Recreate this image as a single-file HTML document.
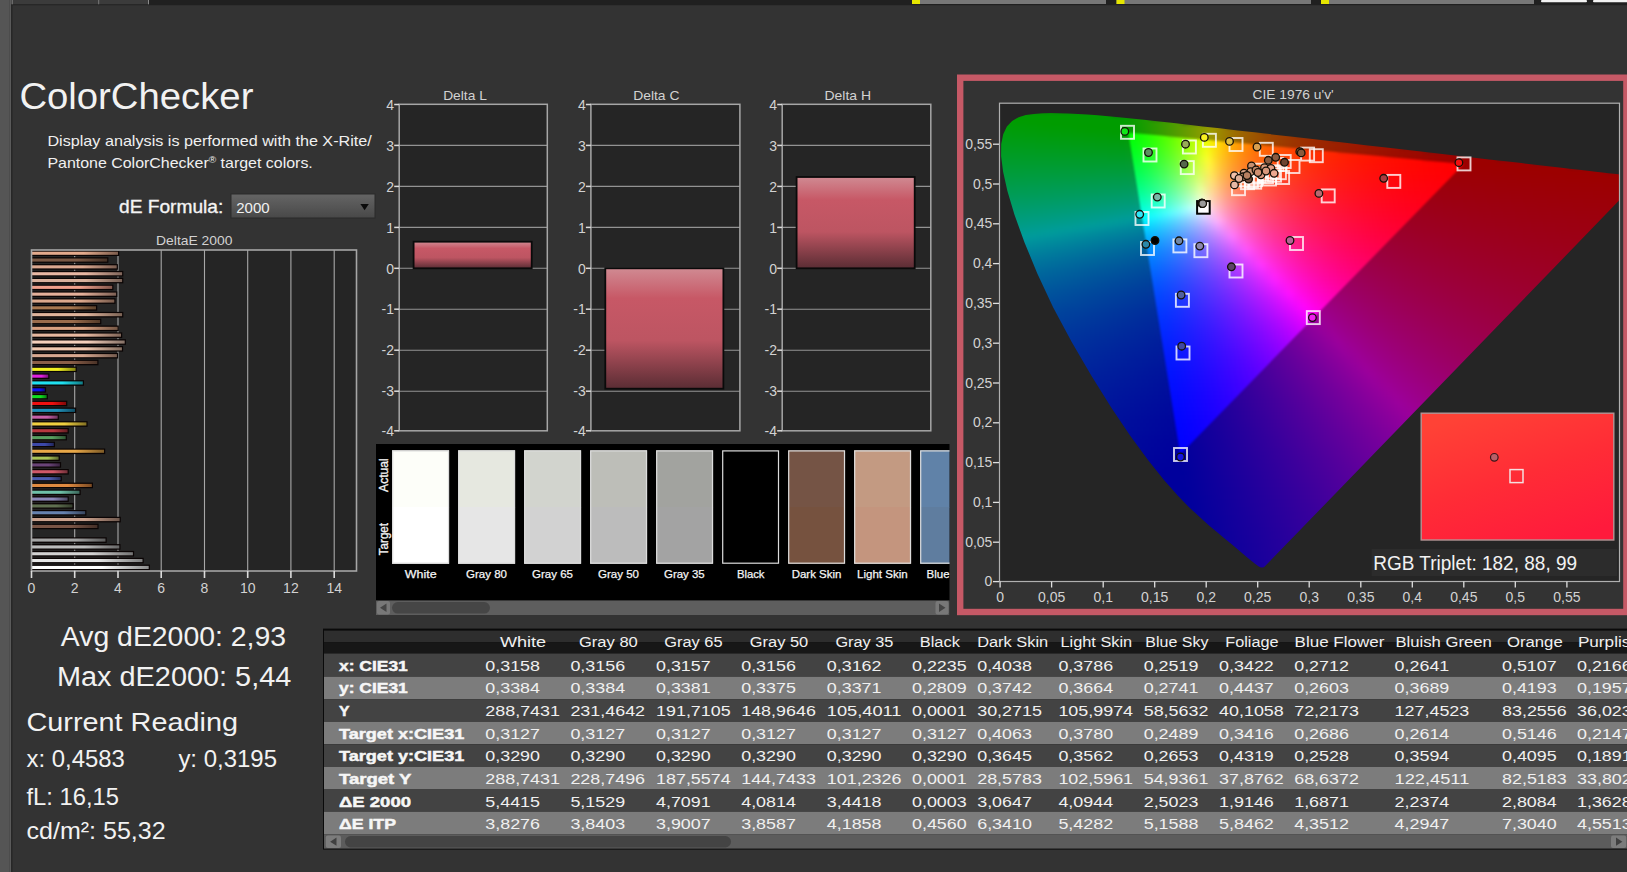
<!DOCTYPE html>
<html lang="en"><head><meta charset="utf-8"><title>ColorChecker</title>
<style>
html,body{margin:0;padding:0;background:#333333;overflow:hidden}
#pg{position:relative;width:1627px;height:872px;overflow:hidden;background:#333333;font-family:'Liberation Sans',sans-serif}
.cie{position:absolute;background:#252525;overflow:hidden}
.lay{position:absolute;left:0;top:0;width:100%;height:100%}
.lay i{position:absolute;display:block}
.sm{position:absolute;left:0;top:0;width:100%;height:100%;filter:blur(2px)}
.blur{position:absolute;left:0;top:0;width:100%;height:100%;filter:blur(.8px)}
#ov{position:absolute;left:0;top:0}
#ov text{font-family:'Liberation Sans',sans-serif;white-space:pre}
</style></head>
<body><div id="pg">
<div class="cie" style="left:999px;top:103px;width:621px;height:479px"><div class="lay" style="clip-path:polygon(265.2px 464.1px,265.1px 464.0px,265.0px 464.1px,264.8px 464.2px,264.5px 464.2px,264.3px 464.2px,264.2px 464.4px,264.0px 464.6px,263.7px 464.6px,263.2px 464.5px,262.8px 464.5px,262.3px 464.5px,261.7px 464.4px,260.8px 464.0px,259.4px 463.2px,257.7px 462.0px,255.7px 460.5px,253.2px 458.5px,250.1px 456.0px,246.5px 453.0px,242.4px 449.4px,237.7px 445.5px,232.1px 440.8px,225.6px 435.4px,218.2px 429.3px,210.0px 422.4px,200.7px 414.1px,190.3px 404.5px,178.9px 392.8px,165.2px 377.2px,149.0px 357.0px,131.2px 332.8px,112.2px 304.6px,92.4px 272.7px,72.7px 239.0px,54.2px 204.4px,38.4px 170.7px,25.5px 139.4px,15.4px 111.5px,8.4px 88.1px,4.1px 68.8px,2.1px 53.3px,2.2px 41.0px,4.2px 31.2px,7.9px 23.5px,13.1px 17.9px,19.6px 14.2px,26.8px 12.0px,34.8px 10.9px,43.3px 10.3px,52.1px 10.1px,60.9px 10.2px,69.8px 10.4px,79.0px 10.9px,88.6px 11.5px,98.7px 12.2px,109.3px 13.2px,120.4px 14.2px,132.3px 15.4px,144.9px 16.8px,158.3px 18.2px,172.5px 19.8px,187.6px 21.5px,203.7px 23.4px,220.7px 25.3px,238.7px 27.4px,257.7px 29.6px,277.6px 31.9px,298.4px 34.3px,319.9px 36.7px,342.1px 39.3px,364.8px 41.9px,387.2px 44.5px,409.1px 47.1px,430.8px 49.6px,451.8px 52.0px,471.5px 54.2px,489.9px 56.4px,507.0px 58.3px,522.5px 60.1px,536.6px 61.8px,549.2px 63.2px,560.5px 64.5px,570.7px 65.7px,580.2px 66.8px,588.8px 67.8px,596.6px 68.7px,603.5px 69.5px,609.7px 70.2px,614.9px 70.8px,619.3px 71.3px,623.1px 71.7px,626.4px 72.1px,629.1px 72.4px,631.3px 72.7px,633.0px 72.9px,634.5px 73.1px,635.9px 73.2px,637.0px 73.4px,638.2px 73.5px,639.4px 73.6px,640.4px 73.7px,641.4px 73.9px,641.9px 73.9px,642.3px 74.0px,642.6px 74.0px,642.8px 74.0px,642.9px 74.0px)"><div class="sm"><i style="left:18px;top:8px;width:96px;height:4px;background:linear-gradient(90deg,#009c00,#009c00,#009c00,#009c00,#009c00,#009c00,#009c00,#009c00,#009c00)"></i>
<i style="left:8px;top:12px;width:144px;height:4px;background:linear-gradient(90deg,#009c00,#009c00,#009c00,#009c00,#009c00,#009c00,#009c00,#009c00,#009c00,#009c00,#029c00,#139c00,#269c00)"></i>
<i style="left:3px;top:16px;width:180px;height:4px;background:linear-gradient(90deg,#009c00,#009c00,#009c00,#009c00,#009c00,#009c00,#009c00,#009c00,#009c00,#009c00,#009c00,#0b9c00,#1d9c00,#319c00,#469c00,#5c9c00)"></i>
<i style="left:-1px;top:20px;width:228px;height:4px;background:linear-gradient(90deg,#009c05,#009c04,#009c03,#009c02,#009c00,#009c00,#009c00,#009c00,#009c00,#009c00,#009c00,#049c00,#169c00,#2a9c00,#3e9c00,#559c00,#6d9c00,#879c00,#9c9500,#9c7d00)"></i>
<i style="left:-3px;top:24px;width:264px;height:4px;background:linear-gradient(90deg,#009c09,#009c08,#009c07,#009c06,#009c05,#009c04,#009c03,#009c01,#009c00,#009c00,#009c00,#009c00,#129c00,#269c00,#3a9c00,#519c00,#699c00,#839c00,#9c9800,#9c8000,#9c6d00,#9c5d00,#9c5100)"></i>
<i style="left:-4px;top:28px;width:300px;height:4px;background:linear-gradient(90deg,#009c0d,#009c0c,#009c0b,#009c0a,#009c09,#009c08,#009c07,#009c06,#009c05,#009c04,#009c02,#009c01,#109c00,#239c00,#389c00,#4f9c00,#679c00,#819c00,#9c9a00,#9c8100,#9c6d00,#9c5e00,#9c5100,#9c4600,#9c3d00,#9c3600)"></i>
<i style="left:-5px;top:32px;width:336px;height:4px;background:linear-gradient(90deg,#009c11,#009c11,#009c10,#009c0f,#009c0e,#009c0d,#009c0c,#009c0b,#009c0a,#009c09,#009c08,#009c07,#0e9c05,#219c04,#369c02,#4d9c00,#659c00,#7f9c00,#9c9b00,#9c8200,#9c6e00,#9c5e00,#9c5100,#9c4600,#9c3d00,#9c3500,#9c2f00,#9c2900,#9c2400)"></i>
<i style="left:-6px;top:36px;width:372px;height:4px;background:linear-gradient(90deg,#009c16,#009c15,#009c14,#009c14,#009c13,#009c12,#009c11,#009c10,#009c0f,#009c0e,#009c0d,#009c0c,#0b9c0b,#1f9c0a,#349c08,#4a9c07,#639c05,#7d9c04,#9a9c02,#9c8200,#9c6e00,#9c5e00,#9c5100,#9c4600,#9c3d00,#9c3500,#9c2e00,#9c2900,#9c2300,#9c1f00,#9c1b00,#9c1700)"></i>
<i style="left:-6px;top:40px;width:408px;height:4px;background:linear-gradient(90deg,#009c1a,#009c19,#009c19,#009c18,#009c17,#009c17,#009c16,#009c15,#009c15,#009c14,#009c13,#009c12,#0a9c11,#1e9c10,#339c0f,#4a9c0d,#639c0c,#7e9c0b,#9b9c09,#9c8106,#9c6d04,#9c5d02,#9c5001,#9c4500,#9c3c00,#9c3400,#9c2e00,#9c2800,#9c2300,#9c1e00,#9c1a00,#9c1600,#9c1300,#9c1000,#9c0e00)"></i>
<i style="left:-6px;top:44px;width:432px;height:4px;background:linear-gradient(90deg,#009c1e,#009c1e,#009c1d,#009c1d,#009c1c,#009c1c,#009c1b,#009c1b,#009c1a,#009c19,#009c19,#009c18,#099c17,#1d9c16,#339c15,#4a9c14,#639c13,#7e9c12,#9c9b11,#9c800d,#9c6c09,#9c5c07,#9c4f05,#9c4403,#9c3b02,#9c3301,#9c2d00,#9c2700,#9c2200,#9c1d00,#9c1900,#9c1600,#9c1300,#9c1000,#9c0d00,#9c0a00,#9c0800)"></i>
<i style="left:-6px;top:48px;width:468px;height:4px;background:linear-gradient(90deg,#009c23,#009c22,#009c22,#009c22,#009c21,#009c21,#009c20,#009c20,#009c1f,#009c1f,#009c1e,#009c1e,#099c1d,#1d9c1d,#329c1c,#4a9c1b,#639c1a,#7f9c19,#9c9a18,#9c7f13,#9c6b0f,#9c5b0c,#9c4e0a,#9c4308,#9c3a06,#9c3305,#9c2c03,#9c2602,#9c2101,#9c1d00,#9c1900,#9c1500,#9c1200,#9c0f00,#9c0c00,#9c0a00,#9c0800,#9c0600,#9c0400,#9c0200)"></i>
<i style="left:-6px;top:52px;width:504px;height:4px;background:linear-gradient(90deg,#009c27,#009c27,#009c27,#009c26,#009c26,#009c26,#009c26,#009c25,#009c25,#009c25,#009c24,#009c24,#089c24,#1c9c23,#329c23,#4a9c22,#639c22,#7f9c21,#9c9920,#9c7e1a,#9c6a15,#9c5a11,#9c4d0e,#9c420c,#9c390a,#9c3208,#9c2b07,#9c2505,#9c2004,#9c1c03,#9c1802,#9c1401,#9c1101,#9c0e00,#9c0c00,#9c0900,#9c0700,#9c0500,#9c0300,#9c0100,#9c0000,#9c0000,#9c0000)"></i>
<i style="left:-6px;top:56px;width:540px;height:4px;background:linear-gradient(90deg,#009c2c,#009c2b,#009c2b,#009c2b,#009c2b,#009c2b,#009c2b,#009c2b,#009c2b,#009c2b,#009c2a,#009c2a,#079c2a,#1b9c2a,#319c2a,#4a9c29,#649c29,#809c29,#9c9828,#9c7d20,#9c691b,#9c5917,#9c4c13,#9c4110,#9c380e,#9c310c,#9c2a0a,#9c2508,#9c2007,#9c1b06,#9c1705,#9c1404,#9c1103,#9c0e02,#9c0b02,#9c0901,#9c0600,#9c0400,#9c0300,#9c0100,#9c0000,#9c0000,#9c0000,#9c0000,#9c0000,#9c0000)"></i>
<i style="left:-6px;top:60px;width:576px;height:4px;background:linear-gradient(90deg,#009c30,#009c30,#009c30,#009c30,#009c30,#009c30,#009c30,#009c30,#009c30,#009c30,#009c31,#009c31,#069c31,#1a9c31,#319c31,#499c31,#649c31,#819c31,#9c9730,#9c7c27,#9c6821,#9c581c,#9c4b18,#9c4015,#9c3712,#9c300f,#9c290d,#9c240c,#9c1f0a,#9c1a09,#9c1708,#9c1306,#9c1005,#9c0d05,#9c0a04,#9c0803,#9c0602,#9c0402,#9c0201,#9c0001,#9c0000,#9c0000,#9c0000,#9c0000,#9c0000,#9c0000,#9c0000,#9c0000,#9c0000)"></i>
<i style="left:-5px;top:64px;width:612px;height:4px;background:linear-gradient(90deg,#009c35,#009c35,#009c35,#009c35,#009c36,#009c36,#009c36,#009c36,#009c36,#009c37,#009c37,#009c37,#069c37,#1c9c38,#329c38,#4b9c39,#669c39,#849c39,#9c9437,#9c792e,#9c6526,#9c5621,#9c491c,#9c3f19,#9c3616,#9c2e13,#9c2811,#9c220f,#9c1e0d,#9c190b,#9c150a,#9c1209,#9c0f08,#9c0c07,#9c0a06,#9c0705,#9c0504,#9c0304,#9c0103,#9c0002,#9c0002,#9c0001,#9c0001,#9c0000,#9c0000,#9c0000,#9c0000,#9c0000,#9c0000,#9c0000,#9c0000,#9c0000)"></i>
<i style="left:-5px;top:68px;width:636px;height:4px;background:linear-gradient(90deg,#009c3a,#009c3a,#009c3a,#009c3b,#009c3b,#009c3b,#009c3c,#009c3c,#009c3c,#009c3d,#009c3d,#009c3e,#059c3e,#1b9c3f,#329c40,#4b9c40,#669c41,#849c42,#9c923f,#9c7835,#9c642d,#9c5426,#9c4821,#9c3e1d,#9c351a,#9c2d17,#9c2714,#9c2212,#9c1d10,#9c190e,#9c150d,#9c110b,#9c0e0a,#9c0b09,#9c0908,#9c0707,#9c0506,#9c0305,#9c0105,#9c0004,#9c0003,#9c0003,#9c0002,#9c0002,#9c0001,#9c0001,#9c0000,#9c0000,#9c0000,#9c0000,#9c0000,#9c0000,#9c0000,#9c0000)"></i>
<i style="left:-4px;top:72px;width:636px;height:4px;background:linear-gradient(90deg,#009c3f,#009c3f,#009c3f,#009c40,#009c40,#009c41,#009c41,#009c42,#009c43,#009c43,#009c44,#009c45,#069c46,#1c9c47,#339c48,#4d9c49,#699c4a,#889c4b,#9c8f46,#9c753b,#9c6232,#9c522b,#9c4626,#9c3c21,#9c331d,#9c2c1a,#9c2617,#9c2015,#9c1c13,#9c1711,#9c140f,#9c100e,#9c0d0c,#9c0b0b,#9c080a,#9c0609,#9c0408,#9c0207,#9c0007,#9c0006,#9c0005,#9c0004,#9c0004,#9c0003,#9c0003,#9c0002,#9c0002,#9c0001,#9c0001,#9c0001,#9c0000,#9c0000,#9c0000,#9c0000)"></i>
<i style="left:-3px;top:76px;width:636px;height:4px;background:linear-gradient(90deg,#009c44,#009c44,#009c45,#009c45,#009c46,#009c47,#009c47,#009c48,#009c49,#009c4a,#009c4b,#009c4c,#079c4d,#1d9c4e,#359c50,#4f9c51,#6c9c53,#8b9c54,#9c8b4d,#9c7241,#9c5f38,#9c5030,#9c442a,#9c3a25,#9c3221,#9c2b1e,#9c241b,#9c1f18,#9c1a16,#9c1614,#9c1312,#9c0f10,#9c0c0f,#9c0a0d,#9c070c,#9c050b,#9c030a,#9c0109,#9c0008,#9c0007,#9c0007,#9c0006,#9c0005,#9c0005,#9c0004,#9c0004,#9c0003,#9c0003,#9c0002,#9c0002,#9c0001,#9c0001,#9c0001,#9c0000)"></i>
<i style="left:-2px;top:80px;width:636px;height:4px;background:linear-gradient(90deg,#009c49,#009c49,#009c4a,#009c4b,#009c4c,#009c4d,#009c4e,#009c4f,#009c50,#009c51,#009c52,#009c53,#079c55,#1e9c56,#379c58,#519c5a,#6f9c5c,#8f9c5e,#9c8854,#9c6f47,#9c5c3d,#9c4e35,#9c422f,#9c3829,#9c3025,#9c2921,#9c231e,#9c1e1b,#9c1918,#9c1516,#9c1214,#9c0e13,#9c0b11,#9c0910,#9c060e,#9c040d,#9c020c,#9c000b,#9c000a,#9c0009,#9c0008,#9c0008,#9c0007,#9c0006,#9c0006,#9c0005,#9c0005,#9c0004,#9c0004,#9c0003,#9c0003,#9c0002,#9c0002,#9c0001)"></i>
<i style="left:-1px;top:84px;width:636px;height:4px;background:linear-gradient(90deg,#009c4e,#009c4f,#009c50,#009c51,#009c52,#009c53,#009c54,#009c55,#009c56,#009c58,#009c59,#009c5b,#089c5d,#1f9c5f,#389c61,#549c63,#729c66,#929c68,#9c845b,#9c6c4d,#9c5a42,#9c4c3a,#9c4033,#9c362d,#9c2e29,#9c2824,#9c2221,#9c1d1e,#9c181b,#9c1419,#9c1117,#9c0d15,#9c0b13,#9c0812,#9c0610,#9c030f,#9c010e,#9c000d,#9c000c,#9c000b,#9c000a,#9c0009,#9c0008,#9c0008,#9c0007,#9c0007,#9c0006,#9c0005,#9c0005,#9c0004,#9c0004,#9c0003,#9c0003,#9c0003)"></i>
<i style="left:0px;top:88px;width:636px;height:4px;background:linear-gradient(90deg,#009c53,#009c54,#009c55,#009c56,#009c58,#009c59,#009c5a,#009c5c,#009c5d,#009c5f,#009c61,#009c63,#099c65,#209c67,#3a9c6a,#569c6d,#759c70,#969c73,#9c8162,#9c6953,#9c5748,#9c493f,#9c3e37,#9c3531,#9c2d2c,#9c2628,#9c2024,#9c1b21,#9c171e,#9c131c,#9c1019,#9c0c17,#9c0a16,#9c0714,#9c0512,#9c0311,#9c0110,#9c000f,#9c000e,#9c000d,#9c000c,#9c000b,#9c000a,#9c0009,#9c0009,#9c0008,#9c0007,#9c0007,#9c0006,#9c0006,#9c0005,#9c0005,#9c0004,#9c0004)"></i>
<i style="left:1px;top:92px;width:636px;height:4px;background:linear-gradient(90deg,#009c59,#009c5a,#009c5b,#009c5c,#009c5e,#009c5f,#009c61,#009c63,#009c65,#009c67,#009c69,#009c6b,#0a9c6e,#229c70,#3c9c73,#589c77,#789c7a,#9a9c7e,#9c7d69,#9c6659,#9c554d,#9c4743,#9c3c3c,#9c3335,#9c2b30,#9c252b,#9c1f27,#9c1a24,#9c1621,#9c121e,#9c0f1c,#9c0c1a,#9c0918,#9c0616,#9c0415,#9c0213,#9c0012,#9c0010,#9c000f,#9c000e,#9c000d,#9c000c,#9c000c,#9c000b,#9c000a,#9c0009,#9c0009,#9c0008,#9c0007,#9c0007,#9c0006,#9c0006,#9c0005,#9c0005)"></i>
<i style="left:2px;top:96px;width:636px;height:4px;background:linear-gradient(90deg,#009c5e,#009c60,#009c61,#009c63,#009c64,#009c66,#009c68,#009c6a,#009c6c,#009c6e,#009c71,#009c73,#0b9c76,#239c7a,#3e9c7d,#5b9c81,#7b9c85,#9c9887,#9c7a70,#9c645f,#9c5352,#9c4548,#9c3a40,#9c3139,#9c2a34,#9c232f,#9c1e2b,#9c1927,#9c1524,#9c1121,#9c0e1e,#9c0b1c,#9c081a,#9c0518,#9c0317,#9c0115,#9c0014,#9c0012,#9c0011,#9c0010,#9c000f,#9c000e,#9c000d,#9c000c,#9c000b,#9c000b,#9c000a,#9c0009,#9c0009,#9c0008,#9c0008,#9c0007,#9c0007,#9c0006)"></i>
<i style="left:3px;top:100px;width:624px;height:4px;background:linear-gradient(90deg,#009c64,#009c66,#009c67,#009c69,#009c6b,#009c6d,#009c6f,#009c71,#009c74,#009c76,#009c79,#009c7c,#0c9c7f,#249c83,#409c87,#5e9c8b,#7f9c90,#9c948f,#9c7777,#9c6165,#9c5057,#9c434d,#9c3844,#9c2f3d,#9c2837,#9c2232,#9c1c2e,#9c182a,#9c1326,#9c1024,#9c0d21,#9c0a1e,#9c071c,#9c051a,#9c0219,#9c0017,#9c0016,#9c0014,#9c0013,#9c0012,#9c0011,#9c0010,#9c000f,#9c000e,#9c000d,#9c000c,#9c000b,#9c000b,#9c000a,#9c0009,#9c0009,#9c0008,#9c0008)"></i>
<i style="left:5px;top:104px;width:624px;height:4px;background:linear-gradient(90deg,#009c6a,#009c6c,#009c6e,#009c70,#009c72,#009c74,#009c76,#009c79,#009c7c,#009c7f,#009c82,#009c85,#0f9c89,#289c8d,#449c92,#639c97,#849b9c,#9c8d94,#9c717b,#9c5c69,#9c4c5c,#9c4051,#9c3648,#9c2d40,#9c263a,#9c2035,#9c1b30,#9c162c,#9c1229,#9c0e26,#9c0b23,#9c0821,#9c061e,#9c031c,#9c011b,#9c0019,#9c0017,#9c0016,#9c0015,#9c0013,#9c0012,#9c0011,#9c0010,#9c000f,#9c000e,#9c000d,#9c000d,#9c000c,#9c000b,#9c000b,#9c000a,#9c0009,#9c0009)"></i>
<i style="left:6px;top:108px;width:612px;height:4px;background:linear-gradient(90deg,#009c70,#009c72,#009c74,#009c76,#009c79,#009c7b,#009c7e,#009c81,#009c84,#009c87,#009c8b,#009c8f,#109c93,#2a9c98,#469a9c,#61959c,#7e8f9c,#9c899b,#9c6e82,#9c5a6f,#9c4a61,#9c3e55,#9c344c,#9c2b44,#9c243e,#9c1e38,#9c1934,#9c152f,#9c112c,#9c0d28,#9c0a26,#9c0723,#9c0521,#9c031f,#9c011d,#9c001b,#9c0019,#9c0018,#9c0016,#9c0015,#9c0014,#9c0013,#9c0012,#9c0011,#9c0010,#9c000f,#9c000e,#9c000d,#9c000c,#9c000c,#9c000b,#9c000b)"></i>
<i style="left:7px;top:112px;width:612px;height:4px;background:linear-gradient(90deg,#009c76,#009c78,#009c7b,#009c7d,#009c80,#009c83,#009c86,#009c89,#009c8c,#009c90,#009c94,#009c98,#109a9c,#29959c,#43909c,#5d8a9c,#79859c,#947f9c,#9c6b88,#9c5775,#9c4866,#9c3c5a,#9c3250,#9c2a48,#9c2341,#9c1d3c,#9c1837,#9c1432,#9c102e,#9c0c2b,#9c0928,#9c0725,#9c0423,#9c0221,#9c001f,#9c001d,#9c001b,#9c0019,#9c0018,#9c0017,#9c0015,#9c0014,#9c0013,#9c0012,#9c0011,#9c0010,#9c000f,#9c000f,#9c000e,#9c000d,#9c000c,#9c000c)"></i>
<i style="left:9px;top:116px;width:612px;height:4px;background:linear-gradient(90deg,#009c7d,#009c7f,#009c82,#009c84,#009c87,#009c8a,#009c8e,#009c91,#009c95,#009c99,#00999c,#00959c,#12909c,#2a8b9c,#43869c,#5c819c,#767b9c,#90769c,#9c668d,#9c5379,#9c446a,#9c395e,#9c2f54,#9c274b,#9c2144,#9c1b3e,#9c1639,#9c1235,#9c0e31,#9c0b2d,#9c082a,#9c0527,#9c0325,#9c0123,#9c0020,#9c001f,#9c001d,#9c001b,#9c001a,#9c0018,#9c0017,#9c0016,#9c0015,#9c0013,#9c0012,#9c0011,#9c0011,#9c0010,#9c000f,#9c000e,#9c000d,#9c000d)"></i>
<i style="left:10px;top:120px;width:600px;height:4px;background:linear-gradient(90deg,#009c83,#009c86,#009c89,#009c8c,#009c8f,#009c92,#009c96,#009c9a,#00999c,#00959c,#00909c,#008c9c,#12879c,#29829c,#407d9c,#58789c,#71739c,#8a6e9c,#9c6393,#9c507f,#9c426f,#9c3762,#9c2d58,#9c264f,#9c1f48,#9c1a42,#9c153c,#9c1138,#9c0d34,#9c0a30,#9c072d,#9c042a,#9c0227,#9c0025,#9c0022,#9c0020,#9c001f,#9c001d,#9c001b,#9c001a,#9c0018,#9c0017,#9c0016,#9c0015,#9c0014,#9c0013,#9c0012,#9c0011,#9c0010,#9c000f,#9c000f)"></i>
<i style="left:11px;top:124px;width:600px;height:4px;background:linear-gradient(90deg,#009c8a,#009c8d,#009c90,#009c93,#009c97,#009c9a,#00999c,#00959c,#00919c,#008c9c,#00889c,#00839c,#127f9c,#287a9c,#3e759c,#55709c,#6d6b9c,#85669c,#9c5f99,#9c4e84,#9c4074,#9c3567,#9c2c5c,#9c2453,#9c1e4b,#9c1845,#9c143f,#9c103b,#9c0c36,#9c0932,#9c062f,#9c032c,#9c0129,#9c0027,#9c0024,#9c0022,#9c0020,#9c001f,#9c001d,#9c001b,#9c001a,#9c0019,#9c0018,#9c0016,#9c0015,#9c0014,#9c0013,#9c0012,#9c0011,#9c0011,#9c0010)"></i>
<i style="left:13px;top:128px;width:588px;height:4px;background:linear-gradient(90deg,#009c91,#009c94,#009c97,#009c9b,#00989c,#00949c,#00919c,#008c9c,#00889c,#00849c,#00809c,#007b9c,#14779c,#29729c,#3e6e9c,#54699c,#6b649c,#825f9c,#9a5a9c,#9c4a88,#9c3c77,#9c326a,#9c295f,#9c2256,#9c1c4e,#9c1748,#9c1242,#9c0e3d,#9c0b39,#9c0835,#9c0531,#9c022e,#9c002b,#9c0029,#9c0026,#9c0024,#9c0022,#9c0020,#9c001f,#9c001d,#9c001c,#9c001a,#9c0019,#9c0018,#9c0017,#9c0016,#9c0014,#9c0014,#9c0013,#9c0012)"></i>
<i style="left:14px;top:132px;width:588px;height:4px;background:linear-gradient(90deg,#009c98,#009c9b,#00989c,#00959c,#00919c,#008d9c,#00899c,#00859c,#00819c,#007d9c,#00799c,#00749c,#13709c,#286c9c,#3c679c,#51629c,#675d9c,#7d589c,#94539c,#9c478d,#9c3a7c,#9c306e,#9c2763,#9c205a,#9c1a52,#9c154b,#9c1145,#9c0d40,#9c0a3b,#9c0737,#9c0434,#9c0130,#9c002d,#9c002b,#9c0028,#9c0026,#9c0024,#9c0022,#9c0020,#9c001f,#9c001d,#9c001c,#9c001a,#9c0019,#9c0018,#9c0017,#9c0016,#9c0015,#9c0014,#9c0013)"></i>
<i style="left:16px;top:136px;width:576px;height:4px;background:linear-gradient(90deg,#00989c,#00949c,#00919c,#008d9c,#008a9c,#00869c,#00829c,#007e9c,#007a9c,#00769c,#00729c,#026e9c,#15699c,#28659c,#3c609c,#515c9c,#65579c,#7b529c,#904d9c,#9c4391,#9c3780,#9c2d72,#9c2566,#9c1e5d,#9c1955,#9c144e,#9c0f48,#9c0c42,#9c083e,#9c0539,#9c0336,#9c0032,#9c002f,#9c002d,#9c002a,#9c0028,#9c0026,#9c0024,#9c0022,#9c0020,#9c001f,#9c001d,#9c001c,#9c001a,#9c0019,#9c0018,#9c0017,#9c0016,#9c0015)"></i>
<i style="left:17px;top:140px;width:576px;height:4px;background:linear-gradient(90deg,#00919c,#008e9c,#008a9c,#00879c,#00839c,#007f9c,#007c9c,#00789c,#00749c,#00709c,#006c9c,#02689c,#15639c,#275f9c,#3b5b9c,#4e569c,#62529c,#774d9c,#8c489c,#9c4196,#9c3584,#9c2b76,#9c236a,#9c1d60,#9c1758,#9c1251,#9c0e4b,#9c0a45,#9c0740,#9c043c,#9c0238,#9c0035,#9c0032,#9c002f,#9c002c,#9c002a,#9c0027,#9c0025,#9c0024,#9c0022,#9c0020,#9c001f,#9c001d,#9c001c,#9c001b,#9c0019,#9c0018,#9c0017,#9c0016)"></i>
<i style="left:19px;top:144px;width:576px;height:4px;background:linear-gradient(90deg,#008a9c,#00879c,#00849c,#00809c,#007d9c,#00799c,#00759c,#00719c,#006e9c,#006a9c,#00669c,#04629c,#165d9c,#28599c,#3b559c,#4e519c,#614c9c,#75479c,#89439c,#9c3d9a,#9c3288,#9c2979,#9c216d,#9c1b63,#9c155b,#9c1153,#9c0d4d,#9c0947,#9c0642,#9c033e,#9c013a,#9c0037,#9c0033,#9c0030,#9c002e,#9c002b,#9c0029,#9c0027,#9c0025,#9c0023,#9c0022,#9c0020,#9c001f,#9c001d,#9c001c,#9c001b,#9c001a,#9c0019,#9c0017)"></i>
<i style="left:21px;top:148px;width:564px;height:4px;background:linear-gradient(90deg,#00849c,#00819c,#007e9c,#007a9c,#00779c,#00739c,#006f9c,#006c9c,#00689c,#00649c,#00609c,#065c9c,#17589c,#29549c,#3b509c,#4d4b9c,#60479c,#73429c,#863e9c,#9a399c,#9c2f8b,#9c267c,#9c1f70,#9c1966,#9c135d,#9c0f56,#9c0b4f,#9c084a,#9c0545,#9c0240,#9c003c,#9c0039,#9c0035,#9c0032,#9c0030,#9c002d,#9c002b,#9c0029,#9c0027,#9c0025,#9c0023,#9c0021,#9c0020,#9c001f,#9c001d,#9c001c,#9c001b,#9c001a)"></i>
<i style="left:22px;top:152px;width:564px;height:4px;background:linear-gradient(90deg,#007f9c,#007b9c,#00789c,#00759c,#00719c,#006e9c,#006a9c,#00669c,#00639c,#005f9c,#005b9c,#06579c,#17539c,#284f9c,#394b9c,#4b479c,#5d439c,#6f3e9c,#823a9c,#95359c,#9c2d90,#9c2480,#9c1d74,#9c176a,#9c1261,#9c0e59,#9c0a52,#9c064c,#9c0347,#9c0143,#9c003f,#9c003b,#9c0037,#9c0034,#9c0031,#9c002f,#9c002d,#9c002a,#9c0028,#9c0026,#9c0025,#9c0023,#9c0021,#9c0020,#9c001f,#9c001d,#9c001c,#9c001b)"></i>
<i style="left:24px;top:156px;width:552px;height:4px;background:linear-gradient(90deg,#00799c,#00769c,#00739c,#006f9c,#006c9c,#00689c,#00659c,#00619c,#005e9c,#005a9c,#00569c,#08529c,#184e9c,#294a9c,#39469c,#4a429c,#5c3e9c,#6e3a9c,#80359c,#92319c,#9c2a93,#9c2283,#9c1b77,#9c156c,#9c1063,#9c0c5b,#9c0855,#9c054f,#9c0249,#9c0045,#9c0040,#9c003d,#9c0039,#9c0036,#9c0033,#9c0031,#9c002e,#9c002c,#9c002a,#9c0028,#9c0026,#9c0024,#9c0023,#9c0021,#9c0020,#9c001f,#9c001d)"></i>
<i style="left:26px;top:160px;width:552px;height:4px;background:linear-gradient(90deg,#00749c,#00719c,#006d9c,#006a9c,#00679c,#00639c,#00609c,#005c9c,#00599c,#00559c,#00519c,#094e9c,#194a9c,#29469c,#39429c,#4a3e9c,#5b3a9c,#6c369c,#7e319c,#8f2d9c,#9c2796,#9c1f86,#9c197a,#9c136f,#9c0e66,#9c0a5e,#9c0757,#9c0451,#9c014c,#9c0047,#9c0042,#9c003f,#9c003b,#9c0038,#9c0035,#9c0032,#9c0030,#9c002d,#9c002b,#9c0029,#9c0027,#9c0026,#9c0024,#9c0023,#9c0021,#9c0020,#9c001f)"></i>
<i style="left:27px;top:164px;width:540px;height:4px;background:linear-gradient(90deg,#006f9c,#006c9c,#00699c,#00669c,#00629c,#005f9c,#005b9c,#00589c,#00559c,#00519c,#004d9c,#0a4a9c,#19469c,#28429c,#383e9c,#483a9c,#59369c,#69329c,#7a2e9c,#8b2a9c,#9c259a,#9c1d8a,#9c177d,#9c1272,#9c0d69,#9c0961,#9c065a,#9c0354,#9c004e,#9c0049,#9c0045,#9c0041,#9c003d,#9c003a,#9c0037,#9c0034,#9c0031,#9c002f,#9c002d,#9c002b,#9c0029,#9c0027,#9c0026,#9c0024,#9c0022,#9c0021)"></i>
<i style="left:29px;top:168px;width:540px;height:4px;background:linear-gradient(90deg,#006a9c,#00679c,#00649c,#00619c,#005e9c,#005a9c,#00579c,#00549c,#00509c,#004d9c,#00499c,#0b469c,#1a429c,#293e9c,#383a9c,#48369c,#58329c,#682e9c,#782a9c,#89269c,#9a229c,#9c1b8d,#9c1580,#9c1075,#9c0b6b,#9c0863,#9c045c,#9c0156,#9c0050,#9c004b,#9c0047,#9c0043,#9c003f,#9c003c,#9c0038,#9c0036,#9c0033,#9c0031,#9c002e,#9c002c,#9c002a,#9c0029,#9c0027,#9c0025,#9c0024,#9c0022)"></i>
<i style="left:31px;top:172px;width:528px;height:4px;background:linear-gradient(90deg,#00669c,#00639c,#00609c,#005d9c,#00599c,#00569c,#00539c,#00509c,#004c9c,#00499c,#00459c,#0c429c,#1b3e9c,#293a9c,#38379c,#48339c,#572f9c,#672b9c,#77279c,#87239c,#971f9c,#9c1990,#9c1383,#9c0e77,#9c0a6e,#9c0666,#9c035e,#9c0058,#9c0052,#9c004d,#9c0049,#9c0044,#9c0041,#9c003d,#9c003a,#9c0037,#9c0035,#9c0032,#9c0030,#9c002e,#9c002c,#9c002a,#9c0028,#9c0027,#9c0025)"></i>
<i style="left:32px;top:176px;width:528px;height:4px;background:linear-gradient(90deg,#00629c,#005f9c,#005c9c,#00599c,#00569c,#00529c,#004f9c,#004c9c,#00499c,#00459c,#00429c,#0c3e9c,#1a3b9c,#29379c,#37339c,#46309c,#552c9c,#64289c,#74249c,#83209c,#931c9c,#9c1794,#9c1186,#9c0c7b,#9c0871,#9c0569,#9c0261,#9c005b,#9c0055,#9c0050,#9c004b,#9c0047,#9c0043,#9c003f,#9c003c,#9c0039,#9c0036,#9c0034,#9c0031,#9c002f,#9c002d,#9c002b,#9c002a,#9c0028,#9c0026)"></i>
<i style="left:34px;top:180px;width:516px;height:4px;background:linear-gradient(90deg,#005e9c,#005b9c,#00589c,#00559c,#00529c,#004f9c,#004b9c,#00489c,#00459c,#00429c,#003e9c,#0e3b9c,#1b379c,#29349c,#37309c,#462c9c,#54299c,#63259c,#72219c,#811d9c,#91199c,#9c1597,#9c0f89,#9c0b7d,#9c0773,#9c036b,#9c0063,#9c005d,#9c0057,#9c0051,#9c004d,#9c0048,#9c0044,#9c0041,#9c003e,#9c003b,#9c0038,#9c0035,#9c0033,#9c0031,#9c002f,#9c002d,#9c002b,#9c0029)"></i>
<i style="left:36px;top:184px;width:516px;height:4px;background:linear-gradient(90deg,#005a9c,#00579c,#00549c,#00519c,#004e9c,#004b9c,#00489c,#00459c,#00419c,#003e9c,#023b9c,#0f379c,#1c349c,#2a309c,#372d9c,#45299c,#54269c,#62229c,#711e9c,#801b9c,#8f179c,#9c1299,#9c0d8b,#9c0980,#9c0576,#9c026d,#9c0065,#9c005f,#9c0059,#9c0053,#9c004f,#9c004a,#9c0046,#9c0043,#9c003f,#9c003c,#9c0039,#9c0037,#9c0034,#9c0032,#9c0030,#9c002e,#9c002c,#9c002a)"></i>
<i style="left:38px;top:188px;width:504px;height:4px;background:linear-gradient(90deg,#00569c,#00539c,#00509c,#004d9c,#004a9c,#00479c,#00449c,#00419c,#003e9c,#003b9c,#03389c,#10349c,#1d319c,#2a2d9c,#382a9c,#45269c,#53239c,#611f9c,#6f1c9c,#7e189c,#8d149c,#9b109c,#9c0b8e,#9c0782,#9c0378,#9c006f,#9c0068,#9c0061,#9c005b,#9c0055,#9c0050,#9c004c,#9c0048,#9c0044,#9c0041,#9c003e,#9c003b,#9c0038,#9c0036,#9c0033,#9c0031,#9c002f,#9c002d)"></i>
<i style="left:40px;top:192px;width:504px;height:4px;background:linear-gradient(90deg,#00539c,#00509c,#004d9c,#004a9c,#00479c,#00449c,#00419c,#003e9c,#003b9c,#00389c,#04349c,#11319c,#1e2e9c,#2b2b9c,#38279c,#45249c,#52209c,#601d9c,#6e199c,#7c159c,#8a129c,#990e9c,#9c0990,#9c0584,#9c027a,#9c0071,#9c006a,#9c0063,#9c005d,#9c0057,#9c0052,#9c004e,#9c004a,#9c0046,#9c0042,#9c003f,#9c003c,#9c003a,#9c0037,#9c0035,#9c0033,#9c0031,#9c002f)"></i>
<i style="left:42px;top:196px;width:492px;height:4px;background:linear-gradient(90deg,#004f9c,#004c9c,#004a9c,#00479c,#00449c,#00419c,#003e9c,#003b9c,#00389c,#00359c,#06319c,#122e9c,#1e2b9c,#2b289c,#38249c,#45219c,#521e9c,#5f1a9c,#6d179c,#7b139c,#890f9c,#970c9c,#9c0893,#9c0487,#9c007c,#9c0074,#9c006c,#9c0065,#9c005f,#9c0059,#9c0054,#9c004f,#9c004b,#9c0047,#9c0044,#9c0041,#9c003e,#9c003b,#9c0039,#9c0036,#9c0034,#9c0032)"></i>
<i style="left:44px;top:200px;width:492px;height:4px;background:linear-gradient(90deg,#004c9c,#00499c,#00469c,#00449c,#00419c,#003e9c,#003b9c,#00389c,#00359c,#00329c,#072f9c,#132c9c,#1f289c,#2b259c,#38229c,#451f9c,#511b9c,#5e189c,#6c149c,#79119c,#870d9c,#940a9c,#9c0695,#9c0289,#9c007f,#9c0076,#9c006e,#9c0067,#9c0060,#9c005b,#9c0056,#9c0051,#9c004d,#9c0049,#9c0046,#9c0042,#9c003f,#9c003d,#9c003a,#9c0038,#9c0035,#9c0033)"></i>
<i style="left:46px;top:204px;width:480px;height:4px;background:linear-gradient(90deg,#00499c,#00469c,#00439c,#00419c,#003e9c,#003b9c,#00389c,#00359c,#00329c,#002f9c,#082c9c,#14299c,#20269c,#2c239c,#381f9c,#441c9c,#51199c,#5e169c,#6b129c,#780f9c,#850b9c,#92089c,#9c0497,#9c008b,#9c0081,#9c0078,#9c0070,#9c0069,#9c0062,#9c005d,#9c0057,#9c0053,#9c004f,#9c004b,#9c0047,#9c0044,#9c0041,#9c003e,#9c003b,#9c0039,#9c0037)"></i>
<i style="left:48px;top:208px;width:480px;height:4px;background:linear-gradient(90deg,#00469c,#00439c,#00409c,#003e9c,#003b9c,#00389c,#00359c,#00329c,#002f9c,#002c9c,#09299c,#15269c,#20239c,#2c209c,#381d9c,#441a9c,#50179c,#5d139c,#69109c,#760d9c,#83099c,#90069c,#9c0299,#9c008d,#9c0083,#9c007a,#9c0072,#9c006b,#9c0064,#9c005e,#9c0059,#9c0054,#9c0050,#9c004c,#9c0049,#9c0045,#9c0042,#9c003f,#9c003d,#9c003a,#9c0038)"></i>
<i style="left:50px;top:212px;width:468px;height:4px;background:linear-gradient(90deg,#00439c,#00409c,#003e9c,#003b9c,#00389c,#00359c,#00339c,#00309c,#002d9c,#002a9c,#0a279c,#15249c,#21219c,#2c1e9c,#381b9c,#44189c,#50149c,#5c119c,#680e9c,#750b9c,#82079c,#8e049c,#9b009c,#9c008f,#9c0085,#9c007c,#9c0074,#9c006c,#9c0066,#9c0060,#9c005b,#9c0056,#9c0052,#9c004e,#9c004a,#9c0047,#9c0044,#9c0041,#9c003e,#9c003b)"></i>
<i style="left:52px;top:216px;width:468px;height:4px;background:linear-gradient(90deg,#00409c,#003e9c,#003b9c,#00389c,#00369c,#00339c,#00309c,#002d9c,#002a9c,#00289c,#0b259c,#16229c,#211f9c,#2d1c9c,#38199c,#44169c,#50129c,#5b0f9c,#670c9c,#74099c,#80069c,#8d029c,#99009c,#9c0092,#9c0087,#9c007e,#9c0076,#9c006e,#9c0068,#9c0062,#9c005d,#9c0058,#9c0053,#9c004f,#9c004c,#9c0048,#9c0045,#9c0042,#9c003f,#9c003d)"></i>
<i style="left:54px;top:220px;width:456px;height:4px;background:linear-gradient(90deg,#003e9c,#003b9c,#00389c,#00369c,#00339c,#00309c,#002e9c,#002b9c,#00289c,#01259c,#0c229c,#171f9c,#221d9c,#2d1a9c,#38179c,#44149c,#4f109c,#5b0d9c,#670a9c,#72079c,#7f049c,#8b009c,#97009c,#9c0094,#9c0089,#9c0080,#9c0077,#9c0070,#9c006a,#9c0064,#9c005e,#9c0059,#9c0055,#9c0051,#9c004d,#9c004a,#9c0046,#9c0043,#9c0041)"></i>
<i style="left:56px;top:224px;width:456px;height:4px;background:linear-gradient(90deg,#003b9c,#00389c,#00369c,#00339c,#00319c,#002e9c,#002b9c,#00299c,#00269c,#03239c,#0d209c,#181d9c,#221a9c,#2d189c,#38159c,#43129c,#4f0f9c,#5a0c9c,#66089c,#71059c,#7d029c,#89009c,#95009c,#9c0096,#9c008b,#9c0082,#9c0079,#9c0072,#9c006b,#9c0065,#9c0060,#9c005b,#9c0057,#9c0052,#9c004f,#9c004b,#9c0048,#9c0045,#9c0042)"></i>
<i style="left:58px;top:228px;width:444px;height:4px;background:linear-gradient(90deg,#00399c,#00369c,#00339c,#00319c,#002e9c,#002c9c,#00299c,#00269c,#00249c,#04219c,#0e1e9c,#181b9c,#23189c,#2e169c,#38139c,#43109c,#4e0d9c,#590a9c,#65079c,#70049c,#7c019c,#88009c,#93009c,#9c0098,#9c008d,#9c0084,#9c007b,#9c0074,#9c006d,#9c0067,#9c0062,#9c005d,#9c0058,#9c0054,#9c0050,#9c004c,#9c0049,#9c0046)"></i>
<i style="left:61px;top:232px;width:444px;height:4px;background:linear-gradient(90deg,#00369c,#00339c,#00319c,#002e9c,#002c9c,#00299c,#00279c,#00249c,#00219c,#061f9c,#101c9c,#1a199c,#24169c,#2f139c,#39119c,#440e9c,#4f0b9c,#5a089c,#65059c,#70029c,#7b009c,#87009c,#93009c,#9c0099,#9c008e,#9c0085,#9c007c,#9c0075,#9c006e,#9c0068,#9c0063,#9c005e,#9c0059,#9c0055,#9c0051,#9c004e,#9c004a,#9c0047)"></i>
<i style="left:63px;top:236px;width:432px;height:4px;background:linear-gradient(90deg,#00349c,#00319c,#002f9c,#002c9c,#002a9c,#00279c,#00259c,#00229c,#001f9c,#071d9c,#111a9c,#1b179c,#25149c,#2f129c,#390f9c,#440c9c,#4e099c,#59069c,#64039c,#6f009c,#7a009c,#85009c,#91009c,#9c009b,#9c0090,#9c0087,#9c007e,#9c0077,#9c0070,#9c006a,#9c0064,#9c005f,#9c005b,#9c0057,#9c0053,#9c004f,#9c004c)"></i>
<i style="left:65px;top:240px;width:432px;height:4px;background:linear-gradient(90deg,#00319c,#002f9c,#002d9c,#002a9c,#00289c,#00259c,#00239c,#00209c,#001d9c,#081b9c,#11189c,#1b159c,#25139c,#2f109c,#390d9c,#440a9c,#4e089c,#59059c,#63029c,#6e009c,#79009c,#84009c,#8f009c,#9a009c,#9c0092,#9c0088,#9c0080,#9c0078,#9c0072,#9c006b,#9c0066,#9c0061,#9c005c,#9c0058,#9c0054,#9c0050,#9c004d)"></i>
<i style="left:67px;top:244px;width:420px;height:4px;background:linear-gradient(90deg,#002f9c,#002d9c,#002b9c,#00289c,#00269c,#00239c,#00219c,#001e9c,#001c9c,#08199c,#12169c,#1c149c,#26119c,#2f0e9c,#390c9c,#44099c,#4e069c,#58039c,#63009c,#6d009c,#78009c,#83009c,#8e009c,#99009c,#9c0094,#9c008a,#9c0082,#9c007a,#9c0073,#9c006d,#9c0068,#9c0062,#9c005e,#9c0059,#9c0055,#9c0052)"></i>
<i style="left:70px;top:248px;width:420px;height:4px;background:linear-gradient(90deg,#002d9c,#002b9c,#00289c,#00269c,#00239c,#00219c,#001f9c,#001c9c,#011a9c,#0a179c,#14149c,#1d129c,#270f9c,#300c9c,#3a0a9c,#44079c,#4e049c,#58029c,#63009c,#6d009c,#78009c,#82009c,#8d009c,#98009c,#9c0095,#9c008b,#9c0083,#9c007b,#9c0074,#9c006e,#9c0069,#9c0063,#9c005f,#9c005a,#9c0056,#9c0053)"></i>
<i style="left:72px;top:252px;width:408px;height:4px;background:linear-gradient(90deg,#002b9c,#00299c,#00269c,#00249c,#00229c,#001f9c,#001d9c,#001a9c,#02189c,#0b159c,#14139c,#1e109c,#270e9c,#310b9c,#3a089c,#44069c,#4e039c,#58009c,#62009c,#6c009c,#76009c,#81009c,#8b009c,#96009c,#9c0096,#9c008d,#9c0084,#9c007d,#9c0076,#9c0070,#9c006a,#9c0065,#9c0060,#9c005c,#9c0058)"></i>
<i style="left:74px;top:256px;width:408px;height:4px;background:linear-gradient(90deg,#00299c,#00279c,#00259c,#00229c,#00209c,#001d9c,#001b9c,#00199c,#03169c,#0c149c,#15119c,#1e0f9c,#270c9c,#31099c,#3a079c,#44049c,#4e019c,#57009c,#61009c,#6b009c,#75009c,#80009c,#8a009c,#94009c,#9c0098,#9c008f,#9c0086,#9c007e,#9c0078,#9c0071,#9c006c,#9c0066,#9c0062,#9c005d,#9c0059)"></i>
<i style="left:77px;top:260px;width:396px;height:4px;background:linear-gradient(90deg,#00279c,#00259c,#00239c,#00209c,#001e9c,#001c9c,#00199c,#00179c,#05149c,#0d129c,#160f9c,#1f0d9c,#290a9c,#32089c,#3b059c,#45039c,#4e009c,#58009c,#61009c,#6b009c,#75009c,#7f009c,#89009c,#94009c,#9c0099,#9c0090,#9c0087,#9c0080,#9c0079,#9c0072,#9c006d,#9c0068,#9c0063,#9c005e)"></i>
<i style="left:79px;top:264px;width:396px;height:4px;background:linear-gradient(90deg,#00259c,#00239c,#00219c,#001e9c,#001c9c,#001a9c,#00179c,#00159c,#05139c,#0e109c,#170e9c,#200b9c,#29099c,#32069c,#3b049c,#44019c,#4e009c,#57009c,#61009c,#6a009c,#74009c,#7e009c,#88009c,#92009c,#9c009b,#9c0091,#9c0089,#9c0081,#9c007a,#9c0074,#9c006e,#9c0069,#9c0064,#9c0060)"></i>
<i style="left:81px;top:268px;width:384px;height:4px;background:linear-gradient(90deg,#00249c,#00219c,#001f9c,#001d9c,#001b9c,#00189c,#00169c,#00149c,#06119c,#0f0f9c,#180c9c,#200a9c,#29089c,#32059c,#3b039c,#44009c,#4d009c,#57009c,#60009c,#6a009c,#73009c,#7d009c,#87009c,#91009c,#9b009c,#9c0093,#9c008a,#9c0083,#9c007c,#9c0075,#9c0070,#9c006a,#9c0066)"></i>
<i style="left:84px;top:272px;width:384px;height:4px;background:linear-gradient(90deg,#00229c,#001f9c,#001d9c,#001b9c,#00199c,#00169c,#00149c,#00129c,#08109c,#100d9c,#190b9c,#22089c,#2a069c,#33049c,#3c019c,#45009c,#4e009c,#57009c,#60009c,#6a009c,#73009c,#7d009c,#86009c,#90009c,#9a009c,#9c0094,#9c008b,#9c0084,#9c007d,#9c0076,#9c0071,#9c006b,#9c0067)"></i>
<i style="left:86px;top:276px;width:372px;height:4px;background:linear-gradient(90deg,#00209c,#001e9c,#001c9c,#00199c,#00179c,#00159c,#00139c,#00109c,#090e9c,#110c9c,#19099c,#22079c,#2b059c,#33029c,#3c009c,#45009c,#4e009c,#57009c,#60009c,#69009c,#72009c,#7c009c,#85009c,#8f009c,#98009c,#9c0095,#9c008d,#9c0085,#9c007e,#9c0078,#9c0072,#9c006d)"></i>
<i style="left:88px;top:280px;width:372px;height:4px;background:linear-gradient(90deg,#001e9c,#001c9c,#001a9c,#00189c,#00169c,#00149c,#00119c,#010f9c,#090d9c,#120a9c,#1a089c,#22069c,#2b039c,#33019c,#3c009c,#45009c,#4d009c,#56009c,#5f009c,#68009c,#71009c,#7a009c,#84009c,#8d009c,#97009c,#9c0097,#9c008e,#9c0087,#9c0080,#9c0079,#9c0074,#9c006e)"></i>
<i style="left:91px;top:284px;width:360px;height:4px;background:linear-gradient(90deg,#001d9c,#001b9c,#00189c,#00169c,#00149c,#00129c,#00109c,#030d9c,#0b0b9c,#13099c,#1b079c,#23049c,#2c029c,#34009c,#3d009c,#45009c,#4e009c,#57009c,#5f009c,#68009c,#71009c,#7a009c,#83009c,#8d009c,#96009c,#9c0098,#9c008f,#9c0088,#9c0081,#9c007a,#9c0074)"></i>
<i style="left:93px;top:288px;width:360px;height:4px;background:linear-gradient(90deg,#001b9c,#00199c,#00179c,#00159c,#00139c,#00119c,#000e9c,#040c9c,#0c0a9c,#14089c,#1c059c,#24039c,#2c019c,#34009c,#3d009c,#45009c,#4e009c,#56009c,#5f009c,#68009c,#70009c,#79009c,#82009c,#8b009c,#94009c,#9c0099,#9c0091,#9c0089,#9c0082,#9c007c,#9c0076)"></i>
<i style="left:96px;top:292px;width:348px;height:4px;background:linear-gradient(90deg,#001a9c,#00189c,#00159c,#00139c,#00119c,#000f9c,#000d9c,#050b9c,#0d099c,#15069c,#1d049c,#25029c,#2d009c,#35009c,#3d009c,#46009c,#4e009c,#56009c,#5f009c,#68009c,#70009c,#79009c,#82009c,#8b009c,#94009c,#9c009a,#9c0092,#9c008a,#9c0083,#9c007d)"></i>
<i style="left:98px;top:296px;width:348px;height:4px;background:linear-gradient(90deg,#00189c,#00169c,#00149c,#00129c,#00109c,#000e9c,#000c9c,#06099c,#0e079c,#15059c,#1d039c,#25019c,#2d009c,#35009c,#3d009c,#45009c,#4e009c,#56009c,#5e009c,#67009c,#6f009c,#78009c,#81009c,#8a009c,#92009c,#9b009c,#9c0093,#9c008b,#9c0084,#9c007e)"></i>
<i style="left:101px;top:300px;width:336px;height:4px;background:linear-gradient(90deg,#00179c,#00159c,#00139c,#00109c,#000e9c,#000c9c,#000a9c,#07089c,#0f069c,#17049c,#1e029c,#26009c,#2e009c,#36009c,#3e009c,#46009c,#4e009c,#56009c,#5f009c,#67009c,#6f009c,#78009c,#80009c,#89009c,#92009c,#9b009c,#9c0094,#9c008c,#9c0085)"></i>
<i style="left:103px;top:304px;width:336px;height:4px;background:linear-gradient(90deg,#00159c,#00139c,#00119c,#000f9c,#000d9c,#000b9c,#01099c,#08079c,#10059c,#17039c,#1f009c,#26009c,#2e009c,#36009c,#3e009c,#46009c,#4e009c,#56009c,#5e009c,#66009c,#6f009c,#77009c,#7f009c,#88009c,#91009c,#99009c,#9c0095,#9c008e,#9c0087)"></i>
<i style="left:106px;top:308px;width:324px;height:4px;background:linear-gradient(90deg,#00149c,#00129c,#00109c,#000e9c,#000c9c,#000a9c,#02089c,#09069c,#11049c,#18019c,#20009c,#27009c,#2f009c,#37009c,#3e009c,#46009c,#4e009c,#56009c,#5e009c,#66009c,#6f009c,#77009c,#7f009c,#88009c,#90009c,#99009c,#9c0096,#9c008e)"></i>
<i style="left:109px;top:312px;width:312px;height:4px;background:linear-gradient(90deg,#00129c,#00109c,#000e9c,#000c9c,#000a9c,#00089c,#03069c,#0b049c,#12029c,#19009c,#21009c,#28009c,#30009c,#37009c,#3f009c,#47009c,#4f009c,#56009c,#5e009c,#66009c,#6e009c,#77009c,#7f009c,#87009c,#8f009c,#98009c,#9c0097)"></i>
<i style="left:111px;top:316px;width:312px;height:4px;background:linear-gradient(90deg,#00119c,#000f9c,#000d9c,#000b9c,#00099c,#00079c,#04059c,#0b039c,#13019c,#1a009c,#21009c,#29009c,#30009c,#37009c,#3f009c,#47009c,#4e009c,#56009c,#5e009c,#66009c,#6e009c,#76009c,#7e009c,#86009c,#8e009c,#97009c,#9c0098)"></i>
<i style="left:114px;top:320px;width:300px;height:4px;background:linear-gradient(90deg,#00109c,#000e9c,#000c9c,#000a9c,#00089c,#00069c,#06049c,#0d029c,#14009c,#1b009c,#22009c,#29009c,#31009c,#38009c,#40009c,#47009c,#4f009c,#56009c,#5e009c,#66009c,#6e009c,#76009c,#7e009c,#86009c,#8e009c,#96009c)"></i>
<i style="left:117px;top:324px;width:300px;height:4px;background:linear-gradient(90deg,#000f9c,#000d9c,#000b9c,#00099c,#00079c,#00059c,#07039c,#0e019c,#15009c,#1c009c,#23009c,#2a009c,#31009c,#39009c,#40009c,#48009c,#4f009c,#57009c,#5e009c,#66009c,#6e009c,#75009c,#7d009c,#85009c,#8d009c,#95009c)"></i>
<i style="left:119px;top:328px;width:288px;height:4px;background:linear-gradient(90deg,#000d9c,#000b9c,#000a9c,#00089c,#00069c,#01049c,#07029c,#0e009c,#15009c,#1c009c,#23009c,#2a009c,#32009c,#39009c,#40009c,#47009c,#4f009c,#56009c,#5e009c,#65009c,#6d009c,#75009c,#7c009c,#84009c,#8c009c)"></i>
<i style="left:122px;top:332px;width:288px;height:4px;background:linear-gradient(90deg,#000c9c,#000a9c,#00089c,#00069c,#00059c,#02039c,#09019c,#10009c,#16009c,#1d009c,#24009c,#2b009c,#32009c,#39009c,#41009c,#48009c,#4f009c,#57009c,#5e009c,#65009c,#6d009c,#75009c,#7c009c,#84009c,#8c009c)"></i>
<i style="left:125px;top:336px;width:276px;height:4px;background:linear-gradient(90deg,#000b9c,#00099c,#00079c,#00059c,#00039c,#03029c,#0a009c,#11009c,#17009c,#1e009c,#25009c,#2c009c,#33009c,#3a009c,#41009c,#48009c,#50009c,#57009c,#5e009c,#65009c,#6d009c,#74009c,#7c009c,#84009c)"></i>
<i style="left:128px;top:340px;width:276px;height:4px;background:linear-gradient(90deg,#000a9c,#00089c,#00069c,#00049c,#00029c,#04009c,#0b009c,#12009c,#18009c,#1f009c,#26009c,#2d009c,#34009c,#3b009c,#42009c,#49009c,#50009c,#57009c,#5e009c,#66009c,#6d009c,#74009c,#7c009c,#83009c)"></i>
<i style="left:131px;top:344px;width:264px;height:4px;background:linear-gradient(90deg,#00099c,#00079c,#00059c,#00039c,#00019c,#06009c,#0c009c,#13009c,#19009c,#20009c,#27009c,#2e009c,#34009c,#3b009c,#42009c,#49009c,#50009c,#57009c,#5e009c,#66009c,#6d009c,#74009c,#7b009c)"></i>
<i style="left:134px;top:348px;width:252px;height:4px;background:linear-gradient(90deg,#00079c,#00069c,#00049c,#00029c,#01009c,#07009c,#0d009c,#14009c,#1a009c,#21009c,#28009c,#2e009c,#35009c,#3c009c,#43009c,#4a009c,#51009c,#58009c,#5f009c,#66009c,#6d009c,#74009c)"></i>
<i style="left:137px;top:352px;width:252px;height:4px;background:linear-gradient(90deg,#00069c,#00049c,#00039c,#00019c,#02009c,#08009c,#0e009c,#15009c,#1b009c,#22009c,#28009c,#2f009c,#36009c,#3c009c,#43009c,#4a009c,#51009c,#58009c,#5f009c,#66009c,#6d009c,#74009c)"></i>
<i style="left:140px;top:356px;width:240px;height:4px;background:linear-gradient(90deg,#00059c,#00039c,#00029c,#00009c,#03009c,#09009c,#10009c,#16009c,#1c009c,#23009c,#29009c,#30009c,#36009c,#3d009c,#44009c,#4a009c,#51009c,#58009c,#5f009c,#66009c,#6d009c)"></i>
<i style="left:143px;top:360px;width:240px;height:4px;background:linear-gradient(90deg,#00049c,#00029c,#00019c,#00009c,#04009c,#0a009c,#11009c,#17009c,#1d009c,#24009c,#2a009c,#30009c,#37009c,#3d009c,#44009c,#4b009c,#51009c,#58009c,#5f009c,#66009c,#6d009c)"></i>
<i style="left:146px;top:364px;width:228px;height:4px;background:linear-gradient(90deg,#00039c,#00019c,#00009c,#00009c,#05009c,#0b009c,#12009c,#18009c,#1e009c,#24009c,#2b009c,#31009c,#38009c,#3e009c,#45009c,#4b009c,#52009c,#58009c,#5f009c,#66009c)"></i>
<i style="left:149px;top:368px;width:228px;height:4px;background:linear-gradient(90deg,#00029c,#00009c,#00009c,#00009c,#06009c,#0c009c,#13009c,#19009c,#1f009c,#25009c,#2b009c,#32009c,#38009c,#3f009c,#45009c,#4b009c,#52009c,#59009c,#5f009c,#66009c)"></i>
<i style="left:153px;top:372px;width:216px;height:4px;background:linear-gradient(90deg,#00019c,#00009c,#00009c,#02009c,#08009c,#0e009c,#14009c,#1a009c,#20009c,#26009c,#2d009c,#33009c,#39009c,#40009c,#46009c,#4c009c,#53009c,#59009c,#60009c)"></i>
<i style="left:156px;top:376px;width:204px;height:4px;background:linear-gradient(90deg,#00009c,#00009c,#00009c,#03009c,#09009c,#0f009c,#15009c,#1b009c,#21009c,#27009c,#2d009c,#34009c,#3a009c,#40009c,#46009c,#4d009c,#53009c,#5a009c)"></i>
<i style="left:159px;top:380px;width:204px;height:4px;background:linear-gradient(90deg,#00009c,#00009c,#00009c,#04009c,#0a009c,#10009c,#16009c,#1c009c,#22009c,#28009c,#2e009c,#34009c,#3a009c,#40009c,#47009c,#4d009c,#53009c,#5a009c)"></i>
<i style="left:163px;top:384px;width:192px;height:4px;background:linear-gradient(90deg,#00009c,#00009c,#00009c,#06009c,#0c009c,#11009c,#17009c,#1d009c,#23009c,#29009c,#2f009c,#35009c,#3b009c,#41009c,#48009c,#4e009c,#54009c)"></i>
<i style="left:166px;top:388px;width:192px;height:4px;background:linear-gradient(90deg,#00009c,#00009c,#01009c,#07009c,#0d009c,#12009c,#18009c,#1e009c,#24009c,#2a009c,#30009c,#36009c,#3c009c,#42009c,#48009c,#4e009c,#54009c)"></i>
<i style="left:170px;top:392px;width:180px;height:4px;background:linear-gradient(90deg,#00009c,#00009c,#03009c,#08009c,#0e009c,#14009c,#1a009c,#1f009c,#25009c,#2b009c,#31009c,#37009c,#3d009c,#43009c,#49009c,#4f009c)"></i>
<i style="left:174px;top:396px;width:168px;height:4px;background:linear-gradient(90deg,#00009c,#00009c,#04009c,#0a009c,#0f009c,#15009c,#1b009c,#21009c,#26009c,#2c009c,#32009c,#38009c,#3e009c,#44009c,#4a009c)"></i>
<i style="left:177px;top:400px;width:168px;height:4px;background:linear-gradient(90deg,#00009c,#00009c,#05009c,#0b009c,#10009c,#16009c,#1c009c,#21009c,#27009c,#2d009c,#33009c,#38009c,#3e009c,#44009c,#4a009c)"></i>
<i style="left:181px;top:404px;width:156px;height:4px;background:linear-gradient(90deg,#00009c,#01009c,#07009c,#0c009c,#12009c,#17009c,#1d009c,#23009c,#28009c,#2e009c,#34009c,#39009c,#3f009c,#45009c)"></i>
<i style="left:186px;top:408px;width:144px;height:4px;background:linear-gradient(90deg,#00009c,#03009c,#09009c,#0e009c,#14009c,#19009c,#1f009c,#24009c,#2a009c,#2f009c,#35009c,#3b009c,#41009c)"></i>
<i style="left:190px;top:412px;width:144px;height:4px;background:linear-gradient(90deg,#00009c,#05009c,#0a009c,#0f009c,#15009c,#1a009c,#20009c,#25009c,#2b009c,#31009c,#36009c,#3c009c,#42009c)"></i>
<i style="left:194px;top:416px;width:132px;height:4px;background:linear-gradient(90deg,#01009c,#06009c,#0b009c,#11009c,#16009c,#1c009c,#21009c,#27009c,#2c009c,#32009c,#37009c,#3d009c)"></i>
<i style="left:199px;top:420px;width:120px;height:4px;background:linear-gradient(90deg,#03009c,#08009c,#0d009c,#13009c,#18009c,#1d009c,#23009c,#28009c,#2e009c,#33009c,#39009c)"></i>
<i style="left:203px;top:424px;width:120px;height:4px;background:linear-gradient(90deg,#04009c,#09009c,#0f009c,#14009c,#19009c,#1e009c,#24009c,#29009c,#2f009c,#34009c,#3a009c)"></i>
<i style="left:208px;top:428px;width:108px;height:4px;background:linear-gradient(90deg,#06009c,#0b009c,#10009c,#16009c,#1b009c,#20009c,#25009c,#2b009c,#30009c,#35009c)"></i>
<i style="left:213px;top:432px;width:96px;height:4px;background:linear-gradient(90deg,#08009c,#0d009c,#12009c,#17009c,#1c009c,#22009c,#27009c,#2c009c,#32009c)"></i>
<i style="left:218px;top:436px;width:84px;height:4px;background:linear-gradient(90deg,#0a009c,#0f009c,#14009c,#19009c,#1e009c,#23009c,#28009c,#2e009c)"></i>
<i style="left:223px;top:440px;width:84px;height:4px;background:linear-gradient(90deg,#0b009c,#10009c,#15009c,#1a009c,#20009c,#25009c,#2a009c,#2f009c)"></i>
<i style="left:227px;top:444px;width:72px;height:4px;background:linear-gradient(90deg,#0d009c,#12009c,#17009c,#1c009c,#21009c,#26009c,#2b009c)"></i>
<i style="left:232px;top:448px;width:60px;height:4px;background:linear-gradient(90deg,#0e009c,#13009c,#18009c,#1d009c,#22009c,#27009c)"></i>
<i style="left:237px;top:452px;width:48px;height:4px;background:linear-gradient(90deg,#10009c,#15009c,#1a009c,#1f009c,#24009c)"></i>
<i style="left:242px;top:456px;width:48px;height:4px;background:linear-gradient(90deg,#11009c,#16009c,#1b009c,#20009c,#25009c)"></i>
<i style="left:247px;top:460px;width:36px;height:4px;background:linear-gradient(90deg,#13009c,#18009c,#1d009c,#22009c)"></i>
<i style="left:252px;top:464px;width:24px;height:4px;background:linear-gradient(90deg,#15009c,#19009c,#1e009c)"></i></div></div><div class="blur"><div class="lay" style="clip-path:polygon(464.9px 61.0px,129.3px 29.5px,181.2px 351.5px)"><div class="sm"><i style="left:121px;top:28px;width:48px;height:4px;background:linear-gradient(90deg,#00ff01,#04ff00,#1bff00,#38ff00,#5aff00)"></i>
<i style="left:121px;top:32px;width:96px;height:4px;background:linear-gradient(90deg,#00ff06,#04ff05,#1aff04,#37ff02,#5aff01,#82ff00,#afff00,#e3ff00,#ffe400)"></i>
<i style="left:122px;top:36px;width:132px;height:4px;background:linear-gradient(90deg,#00ff0d,#04ff0b,#1bff0a,#39ff08,#5cff07,#85ff05,#b4ff03,#e9ff02,#ffde00,#ffb400,#ff9400,#ff7b00)"></i>
<i style="left:123px;top:40px;width:180px;height:4px;background:linear-gradient(90deg,#00ff13,#05ff12,#1dff11,#3bff0f,#5fff0e,#89ff0c,#b9ff0b,#efff09,#ffd806,#ffaf03,#ff9002,#ff7801,#ff6500,#ff5500,#ff4800,#ff3d00)"></i>
<i style="left:123px;top:44px;width:216px;height:4px;background:linear-gradient(90deg,#00ff1b,#04ff1a,#1cff19,#3aff18,#5fff16,#89ff15,#baff13,#f1ff12,#ffd60e,#ffad0a,#ff8e07,#ff7605,#ff6303,#ff5302,#ff4601,#ff3c00,#ff3300,#ff2b00,#ff2400)"></i>
<i style="left:124px;top:48px;width:264px;height:4px;background:linear-gradient(90deg,#00ff23,#04ff22,#1dff22,#3cff21,#62ff1f,#8dff1e,#bfff1d,#f8ff1c,#ffd016,#ffa810,#ff8a0d,#ff730a,#ff6007,#ff5105,#ff4404,#ff3a03,#ff3102,#ff2901,#ff2300,#ff1d00,#ff1800,#ff1400,#ff1000)"></i>
<i style="left:124px;top:52px;width:300px;height:4px;background:linear-gradient(90deg,#00ff2c,#04ff2b,#1cff2b,#3bff2a,#61ff29,#8dff29,#c0ff28,#f9ff27,#ffce1f,#ffa618,#ff8813,#ff710f,#ff5e0c,#ff4f0a,#ff4308,#ff3806,#ff2f05,#ff2803,#ff2103,#ff1c02,#ff1701,#ff1300,#ff0f00,#ff0c00,#ff0900,#ff0700)"></i>
<i style="left:125px;top:56px;width:348px;height:4px;background:linear-gradient(90deg,#00ff35,#04ff35,#1dff35,#3eff34,#64ff34,#91ff34,#c5ff33,#fffd33,#ffc828,#ffa220,#ff841a,#ff6e15,#ff5b11,#ff4d0e,#ff400c,#ff360a,#ff2e08,#ff2606,#ff2005,#ff1a04,#ff1603,#ff1202,#ff0e02,#ff0b01,#ff0801,#ff0600,#ff0400,#ff0200,#ff0100,#ff0000)"></i>
<i style="left:126px;top:60px;width:348px;height:4px;background:linear-gradient(90deg,#00ff3f,#05ff3f,#1eff3f,#40ff3f,#67ff40,#96ff40,#cbff40,#fff63e,#ffc331,#ff9d28,#ff8020,#ff6a1b,#ff5817,#ff4a13,#ff3e10,#ff340d,#ff2c0b,#ff240a,#ff1e08,#ff1907,#ff1406,#ff1005,#ff0d04,#ff0a03,#ff0702,#ff0502,#ff0301,#ff0101,#ff0000,#ff0000)"></i>
<i style="left:126px;top:64px;width:348px;height:4px;background:linear-gradient(90deg,#00ff49,#04ff4a,#1dff4a,#3fff4b,#67ff4c,#96ff4c,#ccff4d,#fff44b,#ffc13c,#ff9b30,#ff7f28,#ff6822,#ff571c,#ff4818,#ff3d15,#ff3312,#ff2a0f,#ff230d,#ff1d0b,#ff180a,#ff1408,#ff1007,#ff0c06,#ff0905,#ff0704,#ff0403,#ff0203,#ff0102,#ff0002,#ff0001)"></i>
<i style="left:127px;top:68px;width:348px;height:4px;background:linear-gradient(90deg,#00ff54,#04ff55,#1fff56,#41ff57,#6aff59,#9aff5a,#d2ff5b,#ffed56,#ffbb45,#ff9639,#ff7b2f,#ff6528,#ff5422,#ff461d,#ff3a19,#ff3116,#ff2913,#ff2211,#ff1c0e,#ff170d,#ff120b,#ff0e0a,#ff0b08,#ff0807,#ff0606,#ff0405,#ff0205,#ff0004,#ff0003,#ff0003)"></i>
<i style="left:128px;top:72px;width:336px;height:4px;background:linear-gradient(90deg,#00ff60,#05ff61,#20ff63,#44ff64,#6eff66,#9fff68,#d8ff6a,#ffe662,#ffb54f,#ff9241,#ff7737,#ff622f,#ff5128,#ff4322,#ff381e,#ff2f1a,#ff2717,#ff2014,#ff1a12,#ff1510,#ff110e,#ff0d0c,#ff0a0b,#ff070a,#ff0508,#ff0307,#ff0106,#ff0006,#ff0005)"></i>
<i style="left:128px;top:76px;width:336px;height:4px;background:linear-gradient(90deg,#00ff6c,#04ff6e,#1fff70,#43ff72,#6dff75,#a0ff77,#daff7a,#ffe470,#ffb35b,#ff904b,#ff753f,#ff6036,#ff4f2e,#ff4228,#ff3723,#ff2d1f,#ff261b,#ff1f18,#ff1915,#ff1413,#ff1011,#ff0d0f,#ff090e,#ff070c,#ff040b,#ff020a,#ff0109,#ff0008,#ff0007)"></i>
<i style="left:129px;top:80px;width:336px;height:4px;background:linear-gradient(90deg,#00ff79,#05ff7b,#21ff7e,#45ff81,#71ff84,#a5ff87,#e1ff8b,#ffdd7d,#ffae65,#ff8b54,#ff7147,#ff5d3d,#ff4c34,#ff3f2e,#ff3428,#ff2b23,#ff241f,#ff1d1c,#ff1819,#ff1316,#ff0f14,#ff0b12,#ff0810,#ff060f,#ff040d,#ff020c,#ff000b,#ff000a,#ff0009)"></i>
<i style="left:130px;top:84px;width:324px;height:4px;background:linear-gradient(90deg,#00ff86,#06ff89,#22ff8c,#48ff90,#75ff94,#aaff99,#e8ff9e,#ffd689,#ffa870,#ff875d,#ff6d4f,#ff5944,#ff493b,#ff3d33,#ff322d,#ff2928,#ff2224,#ff1c20,#ff161d,#ff121a,#ff0e17,#ff0a15,#ff0713,#ff0511,#ff0310,#ff010e,#ff000d,#ff000c)"></i>
<i style="left:130px;top:88px;width:324px;height:4px;background:linear-gradient(90deg,#00ff94,#04ff97,#21ff9b,#47ffa0,#75ffa5,#abffaa,#e9ffb0,#ffd498,#ffa67c,#ff8568,#ff6b58,#ff574c,#ff4842,#ff3b3a,#ff3133,#ff282d,#ff2128,#ff1b24,#ff1521,#ff111d,#ff0d1b,#ff0a18,#ff0716,#ff0414,#ff0212,#ff0111,#ff000f,#ff000e)"></i>
<i style="left:131px;top:92px;width:312px;height:4px;background:linear-gradient(90deg,#00ffa2,#05ffa7,#23ffac,#4affb1,#79ffb7,#b0ffbe,#f1ffc5,#ffcda5,#ffa187,#ff8071,#ff6760,#ff5453,#ff4548,#ff393f,#ff2f38,#ff2632,#ff1f2d,#ff1928,#ff1424,#ff1021,#ff0c1e,#ff091b,#ff0619,#ff0317,#ff0215,#ff0013,#ff0012)"></i>
<i style="left:132px;top:96px;width:312px;height:4px;background:linear-gradient(90deg,#00ffb1,#06ffb7,#25ffbd,#4dffc3,#7dffca,#b6ffd2,#f9ffdb,#ffc7b2,#ff9b92,#ff7c7a,#ff6468,#ff515a,#ff424e,#ff3645,#ff2c3d,#ff2437,#ff1d31,#ff172c,#ff1328,#ff0e24,#ff0b21,#ff081e,#ff051c,#ff031a,#ff0117,#ff0016,#ff0014)"></i>
<i style="left:132px;top:100px;width:312px;height:4px;background:linear-gradient(90deg,#00ffc1,#05ffc7,#23ffce,#4cffd5,#7dffdd,#b7ffe7,#fbfff1,#ffc4c2,#ff999f,#ff7a85,#ff6272,#ff4f62,#ff4156,#ff354c,#ff2b43,#ff233c,#ff1c36,#ff1631,#ff122c,#ff0d28,#ff0a25,#ff0722,#ff041f,#ff021c,#ff001a,#ff0018,#ff0016)"></i>
<i style="left:133px;top:104px;width:300px;height:4px;background:linear-gradient(90deg,#00ffd2,#06ffd9,#25ffe1,#4fffe9,#81fff3,#bdfffd,#faf5ff,#ffbecf,#ff94aa,#ff758f,#ff5e7a,#ff4c6a,#ff3e5c,#ff3252,#ff2949,#ff2141,#ff1a3b,#ff1535,#ff1030,#ff0c2c,#ff0928,#ff0625,#ff0322,#ff011f,#ff001d,#ff001b)"></i>
<i style="left:133px;top:108px;width:300px;height:4px;background:linear-gradient(90deg,#00ffe3,#04ffeb,#24fff4,#4efffd,#7df6ff,#b0ebff,#e7e0ff,#ffbbe0,#ff91b8,#ff739a,#ff5c84,#ff4a72,#ff3c64,#ff3159,#ff274f,#ff2047,#ff1940,#ff143a,#ff0f35,#ff0b30,#ff082c,#ff0529,#ff0325,#ff0122,#ff0020,#ff001e)"></i>
<i style="left:134px;top:112px;width:300px;height:4px;background:linear-gradient(90deg,#00fff5,#05fffe,#25f6ff,#4becff,#77e2ff,#a7d8ff,#dacdff,#ffb5ed,#ff8cc3,#ff6fa4,#ff588c,#ff477a,#ff396b,#ff2e5f,#ff2554,#ff1e4c,#ff1845,#ff123e,#ff0e39,#ff0a34,#ff0730,#ff042c,#ff0228,#ff0025,#ff0023,#ff0020)"></i>
<i style="left:135px;top:116px;width:288px;height:4px;background:linear-gradient(90deg,#00f6ff,#06edff,#24e3ff,#48daff,#71d0ff,#9fc6ff,#cfbcff,#ffaefa,#ff87ce,#ff6aae,#ff5595,#ff4481,#ff3772,#ff2c65,#ff235a,#ff1c51,#ff1649,#ff1143,#ff0d3d,#ff0938,#ff0633,#ff032f,#ff012c,#ff0028,#ff0025)"></i>
<i style="left:135px;top:120px;width:288px;height:4px;background:linear-gradient(90deg,#00e5ff,#04dcff,#20d3ff,#42caff,#69c0ff,#94b7ff,#c1adff,#f2a3ff,#ff85dd,#ff68ba,#ff539f,#ff428b,#ff357a,#ff2b6c,#ff2261,#ff1b57,#ff154f,#ff1048,#ff0c41,#ff083c,#ff0537,#ff0333,#ff012f,#ff002c,#ff0029)"></i>
<i style="left:136px;top:124px;width:276px;height:4px;background:linear-gradient(90deg,#00d5ff,#05cdff,#1fc4ff,#40bbff,#65b2ff,#8da9ff,#b89fff,#e796ff,#ff80e8,#ff64c4,#ff4fa8,#ff3f92,#ff3381,#ff2872,#ff2066,#ff195c,#ff1353,#ff0e4c,#ff0a46,#ff0740,#ff043b,#ff0236,#ff0032,#ff002f)"></i>
<i style="left:137px;top:128px;width:276px;height:4px;background:linear-gradient(90deg,#00c7ff,#05beff,#1fb6ff,#3eadff,#61a5ff,#879cff,#b093ff,#dc8aff,#ff7bf4,#ff60ce,#ff4cb1,#ff3c9a,#ff3088,#ff2679,#ff1e6c,#ff1761,#ff1258,#ff0d51,#ff094a,#ff0644,#ff033e,#ff013a,#ff0036,#ff0032)"></i>
<i style="left:137px;top:132px;width:276px;height:4px;background:linear-gradient(90deg,#00baff,#04b2ff,#1caaff,#39a2ff,#5a99ff,#7f91ff,#a688ff,#cf7fff,#fb76ff,#ff5eda,#ff4abc,#ff3aa3,#ff2e90,#ff2580,#ff1d73,#ff1668,#ff115e,#ff0c56,#ff084e,#ff0548,#ff0243,#ff013e,#ff0039,#ff0035)"></i>
<i style="left:138px;top:136px;width:264px;height:4px;background:linear-gradient(90deg,#00aeff,#04a6ff,#1b9eff,#3896ff,#578eff,#7a86ff,#9f7eff,#c775ff,#f16dff,#ff5ae4,#ff46c4,#ff38ab,#ff2c97,#ff2286,#ff1b79,#ff146d,#ff0f63,#ff0b5a,#ff0753,#ff044c,#ff0246,#ff0041,#ff003c)"></i>
<i style="left:139px;top:140px;width:264px;height:4px;background:linear-gradient(90deg,#00a3ff,#049bff,#1b94ff,#368cff,#5484ff,#757cff,#9974ff,#bf6cff,#e764ff,#ff56ee,#ff43cd,#ff35b3,#ff299e,#ff208d,#ff197e,#ff1372,#ff0d68,#ff095f,#ff0657,#ff0350,#ff014a,#ff0045,#ff0040)"></i>
<i style="left:139px;top:144px;width:264px;height:4px;background:linear-gradient(90deg,#0099ff,#0392ff,#188aff,#3283ff,#4f7bff,#6f74ff,#906cff,#b464ff,#da5cff,#ff53fc,#ff41d9,#ff33bd,#ff28a7,#ff1f95,#ff1785,#ff1179,#ff0c6e,#ff0864,#ff055c,#ff0255,#ff004e,#ff0049,#ff0044)"></i>
<i style="left:140px;top:148px;width:252px;height:4px;background:linear-gradient(90deg,#0090ff,#0489ff,#1881ff,#317aff,#4d73ff,#6b6bff,#8b64ff,#ae5cff,#d255ff,#f84dff,#ff3ee1,#ff30c5,#ff25ae,#ff1c9b,#ff158b,#ff107e,#ff0b73,#ff0769,#ff0460,#ff0159,#ff0052,#ff004c)"></i>
<i style="left:141px;top:152px;width:252px;height:4px;background:linear-gradient(90deg,#0087ff,#0480ff,#1879ff,#3072ff,#4b6bff,#6864ff,#875dff,#a855ff,#cb4eff,#ef47ff,#ff3aea,#ff2dcd,#ff23b5,#ff1aa2,#ff1491,#ff0e83,#ff0a78,#ff066d,#ff0365,#ff015d,#ff0056,#ff0050)"></i>
<i style="left:141px;top:156px;width:240px;height:4px;background:linear-gradient(90deg,#007fff,#0378ff,#1672ff,#2d6bff,#4664ff,#625dff,#8056ff,#9f4fff,#c148ff,#e441ff,#ff38f6,#ff2bd7,#ff21be,#ff19aa,#ff1298,#ff0d8a,#ff097e,#ff0573,#ff026a,#ff0062,#ff005a)"></i>
<i style="left:142px;top:160px;width:240px;height:4px;background:linear-gradient(90deg,#0077ff,#0371ff,#166aff,#2c64ff,#445dff,#5f57ff,#7c50ff,#9a49ff,#ba43ff,#dc3cff,#ff35ff,#ff29df,#ff1fc5,#ff17b0,#ff119e,#ff0b90,#ff0783,#ff0478,#ff016e,#ff0066,#ff005e)"></i>
<i style="left:143px;top:164px;width:240px;height:4px;background:linear-gradient(90deg,#0070ff,#046aff,#1564ff,#2b5dff,#4357ff,#5d51ff,#784aff,#9544ff,#b43dff,#d537ff,#f630ff,#ff26e7,#ff1ccd,#ff15b7,#ff0fa4,#ff0a95,#ff0688,#ff037c,#ff0073,#ff006a,#ff0062)"></i>
<i style="left:143px;top:168px;width:228px;height:4px;background:linear-gradient(90deg,#006aff,#0364ff,#145eff,#2858ff,#3f52ff,#584bff,#7245ff,#8f3fff,#ac39ff,#cb32ff,#eb2cff,#ff24f2,#ff1bd6,#ff13bf,#ff0dac,#ff099c,#ff058e,#ff0282,#ff0078,#ff006f)"></i>
<i style="left:144px;top:172px;width:228px;height:4px;background:linear-gradient(90deg,#0064ff,#035eff,#1458ff,#2752ff,#3e4cff,#5646ff,#6f40ff,#8a3aff,#a734ff,#c52eff,#e428ff,#ff21fa,#ff19dd,#ff11c6,#ff0cb2,#ff07a1,#ff0493,#ff0187,#ff007c,#ff0073)"></i>
<i style="left:144px;top:176px;width:228px;height:4px;background:linear-gradient(90deg,#005eff,#0259ff,#1253ff,#254dff,#3a47ff,#5142ff,#6a3cff,#8436ff,#a030ff,#bc2aff,#da25ff,#fa1fff,#ff17e7,#ff10ce,#ff0bba,#ff06a8,#ff039a,#ff008d,#ff0082,#ff0078)"></i>
<i style="left:145px;top:180px;width:216px;height:4px;background:linear-gradient(90deg,#0059ff,#0353ff,#124eff,#2448ff,#3943ff,#503dff,#6737ff,#8132ff,#9b2cff,#b727ff,#d421ff,#f21cff,#ff15ee,#ff0ed5,#ff09c0,#ff05ae,#ff029f,#ff0092,#ff0086)"></i>
<i style="left:146px;top:184px;width:216px;height:4px;background:linear-gradient(90deg,#0054ff,#034eff,#1249ff,#2444ff,#383eff,#4e39ff,#6533ff,#7d2eff,#9728ff,#b223ff,#ce1eff,#eb18ff,#ff13f5,#ff0cdb,#ff07c6,#ff04b4,#ff01a4,#ff0096,#ff008b)"></i>
<i style="left:146px;top:188px;width:204px;height:4px;background:linear-gradient(90deg,#004fff,#024aff,#1045ff,#2240ff,#353aff,#4a35ff,#6030ff,#782aff,#9125ff,#ab20ff,#c61bff,#e216ff,#ff11ff,#ff0be4,#ff06ce,#ff03bb,#ff00aa,#ff009c)"></i>
<i style="left:147px;top:192px;width:204px;height:4px;background:linear-gradient(90deg,#004bff,#0246ff,#1040ff,#213bff,#3436ff,#4931ff,#5e2cff,#7527ff,#8d22ff,#a61dff,#c018ff,#db13ff,#f80fff,#ff09eb,#ff05d4,#ff01c0,#ff00b0,#ff00a1)"></i>
<i style="left:148px;top:196px;width:204px;height:4px;background:linear-gradient(90deg,#0046ff,#0341ff,#103cff,#2137ff,#3332ff,#472eff,#5c29ff,#7224ff,#8a1fff,#a21aff,#bb15ff,#d611ff,#f10cff,#ff08f2,#ff03da,#ff00c6,#ff00b5,#ff00a6)"></i>
<i style="left:148px;top:200px;width:192px;height:4px;background:linear-gradient(90deg,#0043ff,#023eff,#0f39ff,#1f34ff,#312fff,#442bff,#5826ff,#6e21ff,#841cff,#9c18ff,#b413ff,#ce0fff,#e80aff,#ff06fb,#ff02e2,#ff00cd,#ff00bc)"></i>
<i style="left:149px;top:204px;width:192px;height:4px;background:linear-gradient(90deg,#003fff,#023aff,#0f35ff,#1f31ff,#302cff,#4327ff,#5623ff,#6b1eff,#811aff,#9815ff,#b011ff,#c90dff,#e208ff,#fd05ff,#ff01e8,#ff00d3,#ff00c1)"></i>
<i style="left:150px;top:208px;width:180px;height:4px;background:linear-gradient(90deg,#003bff,#0336ff,#0f32ff,#1e2dff,#2f29ff,#4124ff,#5520ff,#691bff,#7e17ff,#9513ff,#ac0fff,#c40bff,#dc07ff,#f603ff,#ff00ef,#ff00d9)"></i>
<i style="left:150px;top:212px;width:180px;height:4px;background:linear-gradient(90deg,#0038ff,#0233ff,#0e2fff,#1d2bff,#2d26ff,#3f22ff,#511dff,#6519ff,#7a15ff,#8f11ff,#a60dff,#bd09ff,#d505ff,#ee02ff,#ff00f7,#ff00e0)"></i>
<i style="left:151px;top:216px;width:180px;height:4px;background:linear-gradient(90deg,#0035ff,#0230ff,#0e2cff,#1c28ff,#2c23ff,#3d1fff,#501bff,#6317ff,#7713ff,#8c0fff,#a20bff,#b807ff,#d004ff,#e801ff,#ff00fd,#ff00e6)"></i>
<i style="left:152px;top:220px;width:168px;height:4px;background:linear-gradient(90deg,#0031ff,#022dff,#0e29ff,#1c25ff,#2c21ff,#3c1dff,#4e19ff,#6115ff,#7511ff,#890dff,#9e09ff,#b406ff,#cb02ff,#e200ff,#fb00ff)"></i>
<i style="left:152px;top:224px;width:168px;height:4px;background:linear-gradient(90deg,#002fff,#022bff,#0d27ff,#1b22ff,#2a1eff,#3a1aff,#4b17ff,#5e13ff,#710fff,#840bff,#9908ff,#ae04ff,#c401ff,#db00ff,#f300ff)"></i>
<i style="left:153px;top:228px;width:168px;height:4px;background:linear-gradient(90deg,#002cff,#0228ff,#0d24ff,#1a20ff,#291cff,#3918ff,#4a14ff,#5c11ff,#6e0dff,#8209ff,#9606ff,#ab03ff,#c000ff,#d600ff,#ed00ff)"></i>
<i style="left:153px;top:232px;width:156px;height:4px;background:linear-gradient(90deg,#0029ff,#0226ff,#0c22ff,#191eff,#271aff,#3716ff,#4713ff,#590fff,#6b0cff,#7d08ff,#9105ff,#a502ff,#ba00ff,#d000ff)"></i>
<i style="left:154px;top:236px;width:156px;height:4px;background:linear-gradient(90deg,#0027ff,#0223ff,#0c1fff,#191cff,#2718ff,#3614ff,#4611ff,#570dff,#690aff,#7b07ff,#8e04ff,#a201ff,#b600ff,#cb00ff)"></i>
<i style="left:155px;top:240px;width:144px;height:4px;background:linear-gradient(90deg,#0024ff,#0221ff,#0c1dff,#1919ff,#2616ff,#3512ff,#450fff,#550cff,#6708ff,#7905ff,#8b02ff,#9f00ff,#b200ff)"></i>
<i style="left:155px;top:244px;width:144px;height:4px;background:linear-gradient(90deg,#0022ff,#011fff,#0b1bff,#1718ff,#2514ff,#3311ff,#430dff,#530aff,#6307ff,#7504ff,#8702ff,#9a00ff,#ad00ff)"></i>
<i style="left:156px;top:248px;width:144px;height:4px;background:linear-gradient(90deg,#0020ff,#021dff,#0b19ff,#1716ff,#2412ff,#330fff,#410cff,#5109ff,#6206ff,#7303ff,#8401ff,#9700ff,#aa00ff)"></i>
<i style="left:157px;top:252px;width:132px;height:4px;background:linear-gradient(90deg,#001eff,#021aff,#0c17ff,#1714ff,#2411ff,#320dff,#400aff,#5007ff,#6004ff,#7102ff,#8200ff,#9400ff)"></i>
<i style="left:157px;top:256px;width:132px;height:4px;background:linear-gradient(90deg,#001cff,#0119ff,#0b16ff,#1612ff,#230fff,#300cff,#3e09ff,#4d06ff,#5d04ff,#6d01ff,#7e00ff,#9000ff)"></i>
<i style="left:158px;top:260px;width:132px;height:4px;background:linear-gradient(90deg,#001aff,#0217ff,#0b14ff,#1611ff,#220eff,#2f0bff,#3d08ff,#4c05ff,#5c02ff,#6b00ff,#7c00ff,#8d00ff)"></i>
<i style="left:159px;top:264px;width:120px;height:4px;background:linear-gradient(90deg,#0018ff,#0215ff,#0b12ff,#160fff,#220cff,#2f09ff,#3d06ff,#4b04ff,#5a01ff,#6a00ff,#7a00ff)"></i>
<i style="left:159px;top:268px;width:120px;height:4px;background:linear-gradient(90deg,#0017ff,#0114ff,#0a11ff,#150eff,#210bff,#2d08ff,#3b05ff,#4903ff,#5701ff,#6700ff,#7600ff)"></i>
<i style="left:160px;top:272px;width:108px;height:4px;background:linear-gradient(90deg,#0015ff,#0212ff,#0a0fff,#150cff,#2009ff,#2d07ff,#3a04ff,#4802ff,#5600ff,#6500ff)"></i>
<i style="left:161px;top:276px;width:108px;height:4px;background:linear-gradient(90deg,#0013ff,#0210ff,#0a0eff,#150bff,#2008ff,#2c06ff,#3903ff,#4701ff,#5500ff,#6300ff)"></i>
<i style="left:161px;top:280px;width:108px;height:4px;background:linear-gradient(90deg,#0012ff,#010fff,#0a0cff,#140aff,#1f07ff,#2b05ff,#3702ff,#4400ff,#5200ff,#6100ff)"></i>
<i style="left:162px;top:284px;width:96px;height:4px;background:linear-gradient(90deg,#0011ff,#020eff,#0a0bff,#1409ff,#1e06ff,#2a04ff,#3702ff,#4400ff,#5100ff)"></i>
<i style="left:163px;top:288px;width:96px;height:4px;background:linear-gradient(90deg,#000fff,#020cff,#0a0aff,#1307ff,#1e05ff,#2a03ff,#3601ff,#4300ff,#5000ff)"></i>
<i style="left:163px;top:292px;width:96px;height:4px;background:linear-gradient(90deg,#000eff,#010bff,#0909ff,#1306ff,#1d04ff,#2802ff,#3400ff,#4100ff,#4e00ff)"></i>
<i style="left:164px;top:296px;width:84px;height:4px;background:linear-gradient(90deg,#000dff,#010aff,#0908ff,#1305ff,#1d03ff,#2801ff,#3400ff,#4000ff)"></i>
<i style="left:164px;top:300px;width:84px;height:4px;background:linear-gradient(90deg,#000cff,#0109ff,#0907ff,#1205ff,#1c02ff,#2701ff,#3200ff,#3e00ff)"></i>
<i style="left:165px;top:304px;width:72px;height:4px;background:linear-gradient(90deg,#000aff,#0108ff,#0906ff,#1204ff,#1c02ff,#2600ff,#3200ff)"></i>
<i style="left:166px;top:308px;width:72px;height:4px;background:linear-gradient(90deg,#0009ff,#0107ff,#0905ff,#1203ff,#1b01ff,#2600ff,#3100ff)"></i>
<i style="left:166px;top:312px;width:72px;height:4px;background:linear-gradient(90deg,#0008ff,#0106ff,#0804ff,#1102ff,#1a00ff,#2500ff,#3000ff)"></i>
<i style="left:167px;top:316px;width:60px;height:4px;background:linear-gradient(90deg,#0007ff,#0105ff,#0803ff,#1101ff,#1a00ff,#2400ff)"></i>
<i style="left:168px;top:320px;width:60px;height:4px;background:linear-gradient(90deg,#0006ff,#0104ff,#0802ff,#1101ff,#1a00ff,#2400ff)"></i>
<i style="left:168px;top:324px;width:60px;height:4px;background:linear-gradient(90deg,#0005ff,#0103ff,#0802ff,#1000ff,#1900ff,#2300ff)"></i>
<i style="left:169px;top:328px;width:48px;height:4px;background:linear-gradient(90deg,#0005ff,#0103ff,#0801ff,#1000ff,#1900ff)"></i>
<i style="left:170px;top:332px;width:48px;height:4px;background:linear-gradient(90deg,#0004ff,#0102ff,#0800ff,#1000ff,#1900ff)"></i>
<i style="left:170px;top:336px;width:36px;height:4px;background:linear-gradient(90deg,#0003ff,#0101ff,#0800ff,#0f00ff)"></i>
<i style="left:171px;top:340px;width:36px;height:4px;background:linear-gradient(90deg,#0002ff,#0101ff,#0800ff,#0f00ff)"></i>
<i style="left:172px;top:344px;width:36px;height:4px;background:linear-gradient(90deg,#0002ff,#0100ff,#0800ff,#0f00ff)"></i>
<i style="left:172px;top:348px;width:24px;height:4px;background:linear-gradient(90deg,#0001ff,#0100ff,#0700ff)"></i></div></div></div></div>
<svg id="ov" width="1627" height="872" viewBox="0 0 1627 872">
<defs><linearGradient id="dd" x1="0" y1="0" x2="0" y2="1"><stop offset="0" stop-color="#656565"/><stop offset="1" stop-color="#484848"/></linearGradient><linearGradient id="b0"><stop offset="0" stop-color="#ffffff"/><stop offset=".6" stop-color="#ffffff"/><stop offset="1" stop-color="#8c8c8c"/></linearGradient><linearGradient id="b1"><stop offset="0" stop-color="#e6e6e6"/><stop offset=".6" stop-color="#e6e6e6"/><stop offset="1" stop-color="#7e7e7e"/></linearGradient><linearGradient id="b2"><stop offset="0" stop-color="#d2d2d2"/><stop offset=".6" stop-color="#d2d2d2"/><stop offset="1" stop-color="#737373"/></linearGradient><linearGradient id="b3"><stop offset="0" stop-color="#bcbcbc"/><stop offset=".6" stop-color="#bcbcbc"/><stop offset="1" stop-color="#676767"/></linearGradient><linearGradient id="b4"><stop offset="0" stop-color="#a4a4a4"/><stop offset=".6" stop-color="#a4a4a4"/><stop offset="1" stop-color="#5a5a5a"/></linearGradient><linearGradient id="b6"><stop offset="0" stop-color="#7a5546"/><stop offset=".6" stop-color="#7a5546"/><stop offset="1" stop-color="#432e26"/></linearGradient><linearGradient id="b7"><stop offset="0" stop-color="#c9a08c"/><stop offset=".6" stop-color="#c9a08c"/><stop offset="1" stop-color="#6e584d"/></linearGradient><linearGradient id="b8"><stop offset="0" stop-color="#6682b0"/><stop offset=".6" stop-color="#6682b0"/><stop offset="1" stop-color="#384760"/></linearGradient><linearGradient id="b9"><stop offset="0" stop-color="#5f7050"/><stop offset=".6" stop-color="#5f7050"/><stop offset="1" stop-color="#343d2c"/></linearGradient><linearGradient id="b10"><stop offset="0" stop-color="#8c88b8"/><stop offset=".6" stop-color="#8c88b8"/><stop offset="1" stop-color="#4d4a65"/></linearGradient><linearGradient id="b11"><stop offset="0" stop-color="#6ec0a8"/><stop offset=".6" stop-color="#6ec0a8"/><stop offset="1" stop-color="#3c695c"/></linearGradient><linearGradient id="b12"><stop offset="0" stop-color="#e08a40"/><stop offset=".6" stop-color="#e08a40"/><stop offset="1" stop-color="#7b4b23"/></linearGradient><linearGradient id="b13"><stop offset="0" stop-color="#4c5cb0"/><stop offset=".6" stop-color="#4c5cb0"/><stop offset="1" stop-color="#293260"/></linearGradient><linearGradient id="b14"><stop offset="0" stop-color="#d05868"/><stop offset=".6" stop-color="#d05868"/><stop offset="1" stop-color="#723039"/></linearGradient><linearGradient id="b15"><stop offset="0" stop-color="#6a4478"/><stop offset=".6" stop-color="#6a4478"/><stop offset="1" stop-color="#3a2542"/></linearGradient><linearGradient id="b16"><stop offset="0" stop-color="#a8c458"/><stop offset=".6" stop-color="#a8c458"/><stop offset="1" stop-color="#5c6b30"/></linearGradient><linearGradient id="b17"><stop offset="0" stop-color="#e8a848"/><stop offset=".6" stop-color="#e8a848"/><stop offset="1" stop-color="#7f5c27"/></linearGradient><linearGradient id="b18"><stop offset="0" stop-color="#3c48a8"/><stop offset=".6" stop-color="#3c48a8"/><stop offset="1" stop-color="#21275c"/></linearGradient><linearGradient id="b19"><stop offset="0" stop-color="#58a060"/><stop offset=".6" stop-color="#58a060"/><stop offset="1" stop-color="#305834"/></linearGradient><linearGradient id="b20"><stop offset="0" stop-color="#b83840"/><stop offset=".6" stop-color="#b83840"/><stop offset="1" stop-color="#651e23"/></linearGradient><linearGradient id="b21"><stop offset="0" stop-color="#f0d040"/><stop offset=".6" stop-color="#f0d040"/><stop offset="1" stop-color="#847223"/></linearGradient><linearGradient id="b22"><stop offset="0" stop-color="#c860a8"/><stop offset=".6" stop-color="#c860a8"/><stop offset="1" stop-color="#6e345c"/></linearGradient><linearGradient id="b23"><stop offset="0" stop-color="#2090b8"/><stop offset=".6" stop-color="#2090b8"/><stop offset="1" stop-color="#114f65"/></linearGradient><linearGradient id="b24"><stop offset="0" stop-color="#ee1010"/><stop offset=".6" stop-color="#ee1010"/><stop offset="1" stop-color="#820808"/></linearGradient><linearGradient id="b25"><stop offset="0" stop-color="#10e020"/><stop offset=".6" stop-color="#10e020"/><stop offset="1" stop-color="#087b11"/></linearGradient><linearGradient id="b26"><stop offset="0" stop-color="#1010f0"/><stop offset=".6" stop-color="#1010f0"/><stop offset="1" stop-color="#080884"/></linearGradient><linearGradient id="b27"><stop offset="0" stop-color="#20e0f0"/><stop offset=".6" stop-color="#20e0f0"/><stop offset="1" stop-color="#117b84"/></linearGradient><linearGradient id="b28"><stop offset="0" stop-color="#e020e0"/><stop offset=".6" stop-color="#e020e0"/><stop offset="1" stop-color="#7b117b"/></linearGradient><linearGradient id="b29"><stop offset="0" stop-color="#f0f020"/><stop offset=".6" stop-color="#f0f020"/><stop offset="1" stop-color="#848411"/></linearGradient><linearGradient id="b30"><stop offset="0" stop-color="#8a5e48"/><stop offset=".6" stop-color="#8a5e48"/><stop offset="1" stop-color="#4b3327"/></linearGradient><linearGradient id="b31"><stop offset="0" stop-color="#d8a890"/><stop offset=".6" stop-color="#d8a890"/><stop offset="1" stop-color="#765c4f"/></linearGradient><linearGradient id="b32"><stop offset="0" stop-color="#f0c8b0"/><stop offset=".6" stop-color="#f0c8b0"/><stop offset="1" stop-color="#846e60"/></linearGradient><linearGradient id="b33"><stop offset="0" stop-color="#f4d0bc"/><stop offset=".6" stop-color="#f4d0bc"/><stop offset="1" stop-color="#867267"/></linearGradient><linearGradient id="b34"><stop offset="0" stop-color="#e8b8a0"/><stop offset=".6" stop-color="#e8b8a0"/><stop offset="1" stop-color="#7f6558"/></linearGradient><linearGradient id="b35"><stop offset="0" stop-color="#d8a080"/><stop offset=".6" stop-color="#d8a080"/><stop offset="1" stop-color="#765846"/></linearGradient><linearGradient id="b36"><stop offset="0" stop-color="#9a6c4c"/><stop offset=".6" stop-color="#9a6c4c"/><stop offset="1" stop-color="#543b29"/></linearGradient><linearGradient id="b37"><stop offset="0" stop-color="#e0b49c"/><stop offset=".6" stop-color="#e0b49c"/><stop offset="1" stop-color="#7b6355"/></linearGradient><linearGradient id="b38"><stop offset="0" stop-color="#a87850"/><stop offset=".6" stop-color="#a87850"/><stop offset="1" stop-color="#5c422c"/></linearGradient><linearGradient id="b39"><stop offset="0" stop-color="#dca88c"/><stop offset=".6" stop-color="#dca88c"/><stop offset="1" stop-color="#795c4d"/></linearGradient><linearGradient id="b40"><stop offset="0" stop-color="#e4b09a"/><stop offset=".6" stop-color="#e4b09a"/><stop offset="1" stop-color="#7d6054"/></linearGradient><linearGradient id="b41"><stop offset="0" stop-color="#f0a08c"/><stop offset=".6" stop-color="#f0a08c"/><stop offset="1" stop-color="#84584d"/></linearGradient><linearGradient id="b42"><stop offset="0" stop-color="#d8b09c"/><stop offset=".6" stop-color="#d8b09c"/><stop offset="1" stop-color="#766055"/></linearGradient><linearGradient id="b43"><stop offset="0" stop-color="#e8b8a4"/><stop offset=".6" stop-color="#e8b8a4"/><stop offset="1" stop-color="#7f655a"/></linearGradient><linearGradient id="b44"><stop offset="0" stop-color="#dca890"/><stop offset=".6" stop-color="#dca890"/><stop offset="1" stop-color="#795c4f"/></linearGradient><linearGradient id="b45"><stop offset="0" stop-color="#7a5844"/><stop offset=".6" stop-color="#7a5844"/><stop offset="1" stop-color="#433025"/></linearGradient><linearGradient id="b46"><stop offset="0" stop-color="#e4aa8c"/><stop offset=".6" stop-color="#e4aa8c"/><stop offset="1" stop-color="#7d5d4d"/></linearGradient><linearGradient id="dl" x1="0" y1="0" x2="0" y2="1"><stop offset="0" stop-color="#d08a92"/><stop offset=".25" stop-color="#c75866"/><stop offset=".6" stop-color="#bd5562"/><stop offset="1" stop-color="#5a2d34"/></linearGradient><linearGradient id="ins" x1=".25" y1="0" x2=".75" y2="1"><stop offset="0" stop-color="#ff4236"/><stop offset=".5" stop-color="#ff2c36"/><stop offset="1" stop-color="#ff1a3c"/></linearGradient></defs>
<rect x="0.0" y="0.0" width="1627.0" height="5.2" fill="#202020"/>
<rect x="0.0" y="0.0" width="9.0" height="872.0" fill="#555555"/>
<rect x="9.0" y="0.0" width="1.0" height="872.0" fill="#4c4c4c"/>
<rect x="10.0" y="0.0" width="1.2" height="872.0" fill="#5a5a5a"/>
<rect x="11.2" y="0.0" width="1.2" height="872.0" fill="#242424"/>
<rect x="12.0" y="0.0" width="136.5" height="4.3" fill="#3b3b3b"/>
<rect x="11.6" y="0.0" width="1.0" height="4.3" fill="#8a8a8a"/>
<rect x="98.2" y="0.0" width="1.0" height="4.3" fill="#7a7a7a"/>
<rect x="148.0" y="0.0" width="1.0" height="4.3" fill="#8a8a8a"/>
<rect x="912.0" y="0.0" width="194.0" height="4.0" fill="#777777"/>
<rect x="912.0" y="0.0" width="8.0" height="4.0" fill="#e6e600"/>
<rect x="1116.5" y="0.0" width="194.5" height="4.0" fill="#777777"/>
<rect x="1116.5" y="0.0" width="8.0" height="4.0" fill="#e6e600"/>
<rect x="1321.0" y="0.0" width="213.0" height="4.0" fill="#777777"/>
<rect x="1321.0" y="0.0" width="8.0" height="4.0" fill="#e6e600"/>
<rect x="1541.0" y="0.0" width="46.0" height="2.2" fill="#f2f2f2" rx="1"/>
<rect x="1593.0" y="0.0" width="40.0" height="2.2" fill="#f2f2f2" rx="1"/>
<text x="19.4" y="108.6" font-size="37.6" fill="#f2f2f2" textLength="234.0" lengthAdjust="spacingAndGlyphs">ColorChecker</text>
<text x="47.4" y="146.2" font-size="15.0" fill="#f0f0f0" textLength="324.4" lengthAdjust="spacingAndGlyphs">Display analysis is performed with the X-Rite/</text>
<text x="47.4" y="167.8" font-size="15.0" fill="#f0f0f0" textLength="265.4" lengthAdjust="spacingAndGlyphs">Pantone ColorChecker<tspan font-size="9.5" dy="-5">®</tspan><tspan dy="5"> target colors.</tspan></text>
<text x="119.0" y="213.4" font-size="18.6" fill="#f4f4f4" textLength="104.3" lengthAdjust="spacingAndGlyphs" stroke="#f4f4f4" stroke-width=".35">dE Formula:</text>
<rect x="231.0" y="194.0" width="144.0" height="24.0" fill="url(#dd)" stroke="#2b2b2b" stroke-width="1"/>
<text x="236.2" y="213.4" font-size="14.6" fill="#f0f0f0" textLength="33.4" lengthAdjust="spacingAndGlyphs">2000</text>
<path d="M360.4 204h8.4l-4.2 6.3z" fill="#0a0a0a"/>
<text x="156.1" y="244.5" font-size="13.0" fill="#d2d2d2" textLength="76.4" lengthAdjust="spacingAndGlyphs">DeltaE 2000</text>
<rect x="31.5" y="250.0" width="325.0" height="321.0" fill="#252525"/>
<line x1="74.7" y1="250.0" x2="74.7" y2="571.0" stroke="#a8a8a8" stroke-width="1.1"/>
<line x1="118.0" y1="250.0" x2="118.0" y2="571.0" stroke="#a8a8a8" stroke-width="1.1"/>
<line x1="161.2" y1="250.0" x2="161.2" y2="571.0" stroke="#a8a8a8" stroke-width="1.1"/>
<line x1="204.5" y1="250.0" x2="204.5" y2="571.0" stroke="#a8a8a8" stroke-width="1.1"/>
<line x1="247.7" y1="250.0" x2="247.7" y2="571.0" stroke="#a8a8a8" stroke-width="1.1"/>
<line x1="290.9" y1="250.0" x2="290.9" y2="571.0" stroke="#a8a8a8" stroke-width="1.1"/>
<line x1="334.2" y1="250.0" x2="334.2" y2="571.0" stroke="#a8a8a8" stroke-width="1.1"/>
<rect x="31.5" y="564.6" width="118.4" height="5.6" fill="#0a0404"/>
<rect x="31.5" y="565.9" width="117.2" height="3.1" fill="url(#b0)"/>
<rect x="31.5" y="557.8" width="112.2" height="5.6" fill="#0a0404"/>
<rect x="31.5" y="559.0" width="111.0" height="3.1" fill="url(#b1)"/>
<rect x="31.5" y="550.9" width="102.6" height="5.6" fill="#0a0404"/>
<rect x="31.5" y="552.2" width="101.4" height="3.1" fill="url(#b2)"/>
<rect x="31.5" y="544.1" width="89.0" height="5.6" fill="#0a0404"/>
<rect x="31.5" y="545.4" width="87.8" height="3.1" fill="url(#b3)"/>
<rect x="31.5" y="537.3" width="75.2" height="5.6" fill="#0a0404"/>
<rect x="31.5" y="538.5" width="74.0" height="3.1" fill="url(#b4)"/>
<rect x="31.5" y="523.6" width="67.1" height="5.6" fill="#0a0404"/>
<rect x="31.5" y="524.9" width="65.9" height="3.1" fill="url(#b6)"/>
<rect x="31.5" y="516.8" width="89.3" height="5.6" fill="#0a0404"/>
<rect x="31.5" y="518.0" width="88.1" height="3.1" fill="url(#b7)"/>
<rect x="31.5" y="510.0" width="54.9" height="5.6" fill="#0a0404"/>
<rect x="31.5" y="511.2" width="53.7" height="3.1" fill="url(#b8)"/>
<rect x="31.5" y="503.1" width="42.2" height="5.6" fill="#0a0404"/>
<rect x="31.5" y="504.4" width="41.0" height="3.1" fill="url(#b9)"/>
<rect x="31.5" y="496.3" width="37.3" height="5.6" fill="#0a0404"/>
<rect x="31.5" y="497.5" width="36.1" height="3.1" fill="url(#b10)"/>
<rect x="31.5" y="489.5" width="49.2" height="5.6" fill="#0a0404"/>
<rect x="31.5" y="490.7" width="48.0" height="3.1" fill="url(#b11)"/>
<rect x="31.5" y="482.6" width="61.5" height="5.6" fill="#0a0404"/>
<rect x="31.5" y="483.9" width="60.3" height="3.1" fill="url(#b12)"/>
<rect x="31.5" y="475.8" width="30.3" height="5.6" fill="#0a0404"/>
<rect x="31.5" y="477.1" width="29.1" height="3.1" fill="url(#b13)"/>
<rect x="31.5" y="469.0" width="37.3" height="5.6" fill="#0a0404"/>
<rect x="31.5" y="470.2" width="36.1" height="3.1" fill="url(#b14)"/>
<rect x="31.5" y="462.1" width="29.6" height="5.6" fill="#0a0404"/>
<rect x="31.5" y="463.4" width="28.4" height="3.1" fill="url(#b15)"/>
<rect x="31.5" y="455.3" width="28.3" height="5.6" fill="#0a0404"/>
<rect x="31.5" y="456.6" width="27.1" height="3.1" fill="url(#b16)"/>
<rect x="31.5" y="448.5" width="73.7" height="5.6" fill="#0a0404"/>
<rect x="31.5" y="449.7" width="72.5" height="3.1" fill="url(#b17)"/>
<rect x="31.5" y="441.7" width="23.5" height="5.6" fill="#0a0404"/>
<rect x="31.5" y="442.9" width="22.3" height="3.1" fill="url(#b18)"/>
<rect x="31.5" y="434.8" width="35.4" height="5.6" fill="#0a0404"/>
<rect x="31.5" y="436.1" width="34.2" height="3.1" fill="url(#b19)"/>
<rect x="31.5" y="428.0" width="37.3" height="5.6" fill="#0a0404"/>
<rect x="31.5" y="429.2" width="36.1" height="3.1" fill="url(#b20)"/>
<rect x="31.5" y="421.2" width="56.1" height="5.6" fill="#0a0404"/>
<rect x="31.5" y="422.4" width="54.9" height="3.1" fill="url(#b21)"/>
<rect x="31.5" y="414.3" width="27.4" height="5.6" fill="#0a0404"/>
<rect x="31.5" y="415.6" width="26.2" height="3.1" fill="url(#b22)"/>
<rect x="31.5" y="407.5" width="44.7" height="5.6" fill="#0a0404"/>
<rect x="31.5" y="408.8" width="43.5" height="3.1" fill="url(#b23)"/>
<rect x="31.5" y="400.7" width="35.8" height="5.6" fill="#0a0404"/>
<rect x="31.5" y="401.9" width="34.6" height="3.1" fill="url(#b24)"/>
<rect x="31.5" y="393.8" width="16.4" height="5.6" fill="#0a0404"/>
<rect x="31.5" y="395.1" width="15.2" height="3.1" fill="url(#b25)"/>
<rect x="31.5" y="387.0" width="14.6" height="5.6" fill="#0a0404"/>
<rect x="31.5" y="388.3" width="13.4" height="3.1" fill="url(#b26)"/>
<rect x="31.5" y="380.2" width="52.5" height="5.6" fill="#0a0404"/>
<rect x="31.5" y="381.4" width="51.3" height="3.1" fill="url(#b27)"/>
<rect x="31.5" y="373.4" width="17.9" height="5.6" fill="#0a0404"/>
<rect x="31.5" y="374.6" width="16.7" height="3.1" fill="url(#b28)"/>
<rect x="31.5" y="366.5" width="45.3" height="5.6" fill="#0a0404"/>
<rect x="31.5" y="367.8" width="44.1" height="3.1" fill="url(#b29)"/>
<rect x="31.5" y="359.7" width="67.0" height="5.6" fill="#0a0404"/>
<rect x="31.5" y="360.9" width="65.8" height="3.1" fill="url(#b30)"/>
<rect x="31.5" y="352.9" width="86.6" height="5.6" fill="#0a0404"/>
<rect x="31.5" y="354.1" width="85.4" height="3.1" fill="url(#b31)"/>
<rect x="31.5" y="346.0" width="91.6" height="5.6" fill="#0a0404"/>
<rect x="31.5" y="347.3" width="90.4" height="3.1" fill="url(#b32)"/>
<rect x="31.5" y="339.2" width="94.4" height="5.6" fill="#0a0404"/>
<rect x="31.5" y="340.5" width="93.2" height="3.1" fill="url(#b33)"/>
<rect x="31.5" y="332.4" width="90.7" height="5.6" fill="#0a0404"/>
<rect x="31.5" y="333.6" width="89.5" height="3.1" fill="url(#b34)"/>
<rect x="31.5" y="325.5" width="87.3" height="5.6" fill="#0a0404"/>
<rect x="31.5" y="326.8" width="86.1" height="3.1" fill="url(#b35)"/>
<rect x="31.5" y="318.7" width="69.8" height="5.6" fill="#0a0404"/>
<rect x="31.5" y="320.0" width="68.6" height="3.1" fill="url(#b36)"/>
<rect x="31.5" y="311.9" width="91.8" height="5.6" fill="#0a0404"/>
<rect x="31.5" y="313.1" width="90.6" height="3.1" fill="url(#b37)"/>
<rect x="31.5" y="305.1" width="65.7" height="5.6" fill="#0a0404"/>
<rect x="31.5" y="306.3" width="64.5" height="3.1" fill="url(#b38)"/>
<rect x="31.5" y="298.2" width="84.0" height="5.6" fill="#0a0404"/>
<rect x="31.5" y="299.5" width="82.8" height="3.1" fill="url(#b39)"/>
<rect x="31.5" y="291.4" width="85.8" height="5.6" fill="#0a0404"/>
<rect x="31.5" y="292.6" width="84.6" height="3.1" fill="url(#b40)"/>
<rect x="31.5" y="284.6" width="81.9" height="5.6" fill="#0a0404"/>
<rect x="31.5" y="285.8" width="80.7" height="3.1" fill="url(#b41)"/>
<rect x="31.5" y="277.7" width="91.8" height="5.6" fill="#0a0404"/>
<rect x="31.5" y="279.0" width="90.6" height="3.1" fill="url(#b42)"/>
<rect x="31.5" y="270.9" width="91.8" height="5.6" fill="#0a0404"/>
<rect x="31.5" y="272.2" width="90.6" height="3.1" fill="url(#b43)"/>
<rect x="31.5" y="264.1" width="86.4" height="5.6" fill="#0a0404"/>
<rect x="31.5" y="265.3" width="85.2" height="3.1" fill="url(#b44)"/>
<rect x="31.5" y="257.2" width="76.9" height="5.6" fill="#0a0404"/>
<rect x="31.5" y="258.5" width="75.7" height="3.1" fill="url(#b45)"/>
<rect x="31.5" y="250.4" width="87.7" height="5.6" fill="#0a0404"/>
<rect x="31.5" y="251.7" width="86.5" height="3.1" fill="url(#b46)"/>
<rect x="31.5" y="250.0" width="325.0" height="321.0" fill="none" stroke="#a6a6a6" stroke-width="1.6"/>
<line x1="31.5" y1="571.0" x2="31.5" y2="578.0" stroke="#dcdcdc" stroke-width="1.6"/>
<text x="31.5" y="593.0" font-size="14.0" fill="#d2d2d2" text-anchor="middle">0</text>
<line x1="74.7" y1="571.0" x2="74.7" y2="578.0" stroke="#dcdcdc" stroke-width="1.6"/>
<text x="74.7" y="593.0" font-size="14.0" fill="#d2d2d2" text-anchor="middle">2</text>
<line x1="118.0" y1="571.0" x2="118.0" y2="578.0" stroke="#dcdcdc" stroke-width="1.6"/>
<text x="118.0" y="593.0" font-size="14.0" fill="#d2d2d2" text-anchor="middle">4</text>
<line x1="161.2" y1="571.0" x2="161.2" y2="578.0" stroke="#dcdcdc" stroke-width="1.6"/>
<text x="161.2" y="593.0" font-size="14.0" fill="#d2d2d2" text-anchor="middle">6</text>
<line x1="204.5" y1="571.0" x2="204.5" y2="578.0" stroke="#dcdcdc" stroke-width="1.6"/>
<text x="204.5" y="593.0" font-size="14.0" fill="#d2d2d2" text-anchor="middle">8</text>
<line x1="247.7" y1="571.0" x2="247.7" y2="578.0" stroke="#dcdcdc" stroke-width="1.6"/>
<text x="247.7" y="593.0" font-size="14.0" fill="#d2d2d2" text-anchor="middle">10</text>
<line x1="290.9" y1="571.0" x2="290.9" y2="578.0" stroke="#dcdcdc" stroke-width="1.6"/>
<text x="290.9" y="593.0" font-size="14.0" fill="#d2d2d2" text-anchor="middle">12</text>
<line x1="334.2" y1="571.0" x2="334.2" y2="578.0" stroke="#dcdcdc" stroke-width="1.6"/>
<text x="334.2" y="593.0" font-size="14.0" fill="#d2d2d2" text-anchor="middle">14</text>
<text x="443.2" y="99.6" font-size="13.6" fill="#d2d2d2" textLength="43.6" lengthAdjust="spacingAndGlyphs">Delta L</text>
<rect x="399.2" y="104.3" width="148.1" height="326.5" fill="#252525"/>
<line x1="399.2" y1="391.2" x2="547.3" y2="391.2" stroke="#939393" stroke-width="1.1"/>
<line x1="399.2" y1="350.2" x2="547.3" y2="350.2" stroke="#939393" stroke-width="1.1"/>
<line x1="399.2" y1="309.2" x2="547.3" y2="309.2" stroke="#939393" stroke-width="1.1"/>
<line x1="399.2" y1="268.3" x2="547.3" y2="268.3" stroke="#939393" stroke-width="1.1"/>
<line x1="399.2" y1="227.4" x2="547.3" y2="227.4" stroke="#939393" stroke-width="1.1"/>
<line x1="399.2" y1="186.4" x2="547.3" y2="186.4" stroke="#939393" stroke-width="1.1"/>
<line x1="399.2" y1="145.4" x2="547.3" y2="145.4" stroke="#939393" stroke-width="1.1"/>
<rect x="413.6" y="241.7" width="118.1" height="26.6" fill="url(#dl)" stroke="#0a0a0a" stroke-width="1.8"/>
<rect x="399.2" y="104.3" width="148.1" height="326.5" fill="none" stroke="#a6a6a6" stroke-width="1.5"/>
<line x1="394.2" y1="430.8" x2="399.2" y2="430.8" stroke="#dcdcdc" stroke-width="1.5"/>
<text x="394.0" y="436.0" font-size="14.0" fill="#d2d2d2" text-anchor="end">-4</text>
<line x1="394.2" y1="391.2" x2="399.2" y2="391.2" stroke="#dcdcdc" stroke-width="1.5"/>
<text x="394.0" y="396.4" font-size="14.0" fill="#d2d2d2" text-anchor="end">-3</text>
<line x1="394.2" y1="350.2" x2="399.2" y2="350.2" stroke="#dcdcdc" stroke-width="1.5"/>
<text x="394.0" y="355.4" font-size="14.0" fill="#d2d2d2" text-anchor="end">-2</text>
<line x1="394.2" y1="309.2" x2="399.2" y2="309.2" stroke="#dcdcdc" stroke-width="1.5"/>
<text x="394.0" y="314.4" font-size="14.0" fill="#d2d2d2" text-anchor="end">-1</text>
<line x1="394.2" y1="268.3" x2="399.2" y2="268.3" stroke="#dcdcdc" stroke-width="1.5"/>
<text x="394.0" y="273.5" font-size="14.0" fill="#d2d2d2" text-anchor="end">0</text>
<line x1="394.2" y1="227.4" x2="399.2" y2="227.4" stroke="#dcdcdc" stroke-width="1.5"/>
<text x="394.0" y="232.6" font-size="14.0" fill="#d2d2d2" text-anchor="end">1</text>
<line x1="394.2" y1="186.4" x2="399.2" y2="186.4" stroke="#dcdcdc" stroke-width="1.5"/>
<text x="394.0" y="191.6" font-size="14.0" fill="#d2d2d2" text-anchor="end">2</text>
<line x1="394.2" y1="145.4" x2="399.2" y2="145.4" stroke="#dcdcdc" stroke-width="1.5"/>
<text x="394.0" y="150.6" font-size="14.0" fill="#d2d2d2" text-anchor="end">3</text>
<line x1="394.2" y1="104.5" x2="399.2" y2="104.5" stroke="#dcdcdc" stroke-width="1.5"/>
<text x="394.0" y="109.7" font-size="14.0" fill="#d2d2d2" text-anchor="end">4</text>
<text x="633.2" y="99.6" font-size="13.6" fill="#d2d2d2" textLength="46.2" lengthAdjust="spacingAndGlyphs">Delta C</text>
<rect x="590.9" y="104.3" width="149.0" height="326.5" fill="#252525"/>
<line x1="590.9" y1="391.2" x2="739.9" y2="391.2" stroke="#939393" stroke-width="1.1"/>
<line x1="590.9" y1="350.2" x2="739.9" y2="350.2" stroke="#939393" stroke-width="1.1"/>
<line x1="590.9" y1="309.2" x2="739.9" y2="309.2" stroke="#939393" stroke-width="1.1"/>
<line x1="590.9" y1="268.3" x2="739.9" y2="268.3" stroke="#939393" stroke-width="1.1"/>
<line x1="590.9" y1="227.4" x2="739.9" y2="227.4" stroke="#939393" stroke-width="1.1"/>
<line x1="590.9" y1="186.4" x2="739.9" y2="186.4" stroke="#939393" stroke-width="1.1"/>
<line x1="590.9" y1="145.4" x2="739.9" y2="145.4" stroke="#939393" stroke-width="1.1"/>
<rect x="605.3" y="268.3" width="118.1" height="120.4" fill="url(#dl)" stroke="#0a0a0a" stroke-width="1.8"/>
<rect x="590.9" y="104.3" width="149.0" height="326.5" fill="none" stroke="#a6a6a6" stroke-width="1.5"/>
<line x1="585.9" y1="430.8" x2="590.9" y2="430.8" stroke="#dcdcdc" stroke-width="1.5"/>
<text x="585.7" y="436.0" font-size="14.0" fill="#d2d2d2" text-anchor="end">-4</text>
<line x1="585.9" y1="391.2" x2="590.9" y2="391.2" stroke="#dcdcdc" stroke-width="1.5"/>
<text x="585.7" y="396.4" font-size="14.0" fill="#d2d2d2" text-anchor="end">-3</text>
<line x1="585.9" y1="350.2" x2="590.9" y2="350.2" stroke="#dcdcdc" stroke-width="1.5"/>
<text x="585.7" y="355.4" font-size="14.0" fill="#d2d2d2" text-anchor="end">-2</text>
<line x1="585.9" y1="309.2" x2="590.9" y2="309.2" stroke="#dcdcdc" stroke-width="1.5"/>
<text x="585.7" y="314.4" font-size="14.0" fill="#d2d2d2" text-anchor="end">-1</text>
<line x1="585.9" y1="268.3" x2="590.9" y2="268.3" stroke="#dcdcdc" stroke-width="1.5"/>
<text x="585.7" y="273.5" font-size="14.0" fill="#d2d2d2" text-anchor="end">0</text>
<line x1="585.9" y1="227.4" x2="590.9" y2="227.4" stroke="#dcdcdc" stroke-width="1.5"/>
<text x="585.7" y="232.6" font-size="14.0" fill="#d2d2d2" text-anchor="end">1</text>
<line x1="585.9" y1="186.4" x2="590.9" y2="186.4" stroke="#dcdcdc" stroke-width="1.5"/>
<text x="585.7" y="191.6" font-size="14.0" fill="#d2d2d2" text-anchor="end">2</text>
<line x1="585.9" y1="145.4" x2="590.9" y2="145.4" stroke="#dcdcdc" stroke-width="1.5"/>
<text x="585.7" y="150.6" font-size="14.0" fill="#d2d2d2" text-anchor="end">3</text>
<line x1="585.9" y1="104.5" x2="590.9" y2="104.5" stroke="#dcdcdc" stroke-width="1.5"/>
<text x="585.7" y="109.7" font-size="14.0" fill="#d2d2d2" text-anchor="end">4</text>
<text x="824.5" y="99.6" font-size="13.6" fill="#d2d2d2" textLength="46.6" lengthAdjust="spacingAndGlyphs">Delta H</text>
<rect x="782.2" y="104.3" width="148.6" height="326.5" fill="#252525"/>
<line x1="782.2" y1="391.2" x2="930.8" y2="391.2" stroke="#939393" stroke-width="1.1"/>
<line x1="782.2" y1="350.2" x2="930.8" y2="350.2" stroke="#939393" stroke-width="1.1"/>
<line x1="782.2" y1="309.2" x2="930.8" y2="309.2" stroke="#939393" stroke-width="1.1"/>
<line x1="782.2" y1="268.3" x2="930.8" y2="268.3" stroke="#939393" stroke-width="1.1"/>
<line x1="782.2" y1="227.4" x2="930.8" y2="227.4" stroke="#939393" stroke-width="1.1"/>
<line x1="782.2" y1="186.4" x2="930.8" y2="186.4" stroke="#939393" stroke-width="1.1"/>
<line x1="782.2" y1="145.4" x2="930.8" y2="145.4" stroke="#939393" stroke-width="1.1"/>
<rect x="796.6" y="177.0" width="118.1" height="91.3" fill="url(#dl)" stroke="#0a0a0a" stroke-width="1.8"/>
<rect x="782.2" y="104.3" width="148.6" height="326.5" fill="none" stroke="#a6a6a6" stroke-width="1.5"/>
<line x1="777.2" y1="430.8" x2="782.2" y2="430.8" stroke="#dcdcdc" stroke-width="1.5"/>
<text x="777.0" y="436.0" font-size="14.0" fill="#d2d2d2" text-anchor="end">-4</text>
<line x1="777.2" y1="391.2" x2="782.2" y2="391.2" stroke="#dcdcdc" stroke-width="1.5"/>
<text x="777.0" y="396.4" font-size="14.0" fill="#d2d2d2" text-anchor="end">-3</text>
<line x1="777.2" y1="350.2" x2="782.2" y2="350.2" stroke="#dcdcdc" stroke-width="1.5"/>
<text x="777.0" y="355.4" font-size="14.0" fill="#d2d2d2" text-anchor="end">-2</text>
<line x1="777.2" y1="309.2" x2="782.2" y2="309.2" stroke="#dcdcdc" stroke-width="1.5"/>
<text x="777.0" y="314.4" font-size="14.0" fill="#d2d2d2" text-anchor="end">-1</text>
<line x1="777.2" y1="268.3" x2="782.2" y2="268.3" stroke="#dcdcdc" stroke-width="1.5"/>
<text x="777.0" y="273.5" font-size="14.0" fill="#d2d2d2" text-anchor="end">0</text>
<line x1="777.2" y1="227.4" x2="782.2" y2="227.4" stroke="#dcdcdc" stroke-width="1.5"/>
<text x="777.0" y="232.6" font-size="14.0" fill="#d2d2d2" text-anchor="end">1</text>
<line x1="777.2" y1="186.4" x2="782.2" y2="186.4" stroke="#dcdcdc" stroke-width="1.5"/>
<text x="777.0" y="191.6" font-size="14.0" fill="#d2d2d2" text-anchor="end">2</text>
<line x1="777.2" y1="145.4" x2="782.2" y2="145.4" stroke="#dcdcdc" stroke-width="1.5"/>
<text x="777.0" y="150.6" font-size="14.0" fill="#d2d2d2" text-anchor="end">3</text>
<line x1="777.2" y1="104.5" x2="782.2" y2="104.5" stroke="#dcdcdc" stroke-width="1.5"/>
<text x="777.0" y="109.7" font-size="14.0" fill="#d2d2d2" text-anchor="end">4</text>
<rect x="376.0" y="444.0" width="573.5" height="171.0" fill="#000000"/>
<clipPath id="swc"><rect x="376" y="444" width="573.5" height="171"/></clipPath><g clip-path="url(#swc)">
<rect x="392.1" y="450.3" width="57.0" height="57.0" fill="#fdfef9"/>
<rect x="392.1" y="507.0" width="57.0" height="56.8" fill="#ffffff"/>
<rect x="392.7" y="450.9" width="55.8" height="112.3" fill="none" stroke="#dcdcdc" stroke-width="1.2"/>
<text x="404.8" y="577.9" font-size="11.8" fill="#f6f6f6" textLength="31.9" lengthAdjust="spacingAndGlyphs" stroke="#f6f6f6" stroke-width=".25">White</text>
<rect x="458.1" y="450.3" width="57.0" height="57.0" fill="#e6e8e0"/>
<rect x="458.1" y="507.0" width="57.0" height="56.8" fill="#e6e6e6"/>
<rect x="458.7" y="450.9" width="55.8" height="112.3" fill="none" stroke="#dcdcdc" stroke-width="1.2"/>
<text x="466.1" y="577.9" font-size="11.8" fill="#f6f6f6" textLength="40.9" lengthAdjust="spacingAndGlyphs" stroke="#f6f6f6" stroke-width=".25">Gray 80</text>
<rect x="524.1" y="450.3" width="57.0" height="57.0" fill="#d2d4ce"/>
<rect x="524.1" y="507.0" width="57.0" height="56.8" fill="#d2d2d2"/>
<rect x="524.7" y="450.9" width="55.8" height="112.3" fill="none" stroke="#dcdcdc" stroke-width="1.2"/>
<text x="532.1" y="577.9" font-size="11.8" fill="#f6f6f6" textLength="40.9" lengthAdjust="spacingAndGlyphs" stroke="#f6f6f6" stroke-width=".25">Gray 65</text>
<rect x="590.1" y="450.3" width="57.0" height="57.0" fill="#bdbeb8"/>
<rect x="590.1" y="507.0" width="57.0" height="56.8" fill="#bcbcbc"/>
<rect x="590.7" y="450.9" width="55.8" height="112.3" fill="none" stroke="#dcdcdc" stroke-width="1.2"/>
<text x="598.0" y="577.9" font-size="11.8" fill="#f6f6f6" textLength="41.0" lengthAdjust="spacingAndGlyphs" stroke="#f6f6f6" stroke-width=".25">Gray 50</text>
<rect x="656.1" y="450.3" width="57.0" height="57.0" fill="#a2a39f"/>
<rect x="656.1" y="507.0" width="57.0" height="56.8" fill="#a3a3a3"/>
<rect x="656.7" y="450.9" width="55.8" height="112.3" fill="none" stroke="#dcdcdc" stroke-width="1.2"/>
<text x="664.0" y="577.9" font-size="11.8" fill="#f6f6f6" textLength="40.7" lengthAdjust="spacingAndGlyphs" stroke="#f6f6f6" stroke-width=".25">Gray 35</text>
<rect x="722.1" y="450.3" width="57.0" height="57.0" fill="#000000"/>
<rect x="722.1" y="507.0" width="57.0" height="56.8" fill="#000000"/>
<rect x="722.7" y="450.9" width="55.8" height="112.3" fill="none" stroke="#dcdcdc" stroke-width="1.2"/>
<text x="736.9" y="577.9" font-size="11.8" fill="#f6f6f6" textLength="27.6" lengthAdjust="spacingAndGlyphs" stroke="#f6f6f6" stroke-width=".25">Black</text>
<rect x="788.1" y="450.3" width="57.0" height="57.0" fill="#755445"/>
<rect x="788.1" y="507.0" width="57.0" height="56.8" fill="#76523f"/>
<rect x="788.7" y="450.9" width="55.8" height="112.3" fill="none" stroke="#dcdcdc" stroke-width="1.2"/>
<text x="791.7" y="577.9" font-size="11.8" fill="#f6f6f6" textLength="49.7" lengthAdjust="spacingAndGlyphs" stroke="#f6f6f6" stroke-width=".25">Dark Skin</text>
<rect x="854.1" y="450.3" width="57.0" height="57.0" fill="#c39a82"/>
<rect x="854.1" y="507.0" width="57.0" height="56.8" fill="#c4957e"/>
<rect x="854.7" y="450.9" width="55.8" height="112.3" fill="none" stroke="#dcdcdc" stroke-width="1.2"/>
<text x="857.0" y="577.9" font-size="11.8" fill="#f6f6f6" textLength="50.7" lengthAdjust="spacingAndGlyphs" stroke="#f6f6f6" stroke-width=".25">Light Skin</text>
<rect x="920.1" y="450.3" width="57.0" height="57.0" fill="#6082a8"/>
<rect x="920.1" y="507.0" width="57.0" height="56.8" fill="#5f7d9f"/>
<rect x="920.7" y="450.9" width="55.8" height="112.3" fill="none" stroke="#dcdcdc" stroke-width="1.2"/>
<text x="926.6" y="577.9" font-size="11.8" fill="#f6f6f6" textLength="45.4" lengthAdjust="spacingAndGlyphs" stroke="#f6f6f6" stroke-width=".25">Blue Sky</text>
</g>
<text transform="translate(388,491.9) rotate(-90)" font-size="12.4" fill="#f4f4f4" stroke="#f4f4f4" stroke-width=".3" textLength="33.6" lengthAdjust="spacingAndGlyphs">Actual</text>
<text transform="translate(388,555.2) rotate(-90)" font-size="12.4" fill="#f4f4f4" stroke="#f4f4f4" stroke-width=".3" textLength="32.2" lengthAdjust="spacingAndGlyphs">Target</text>
<rect x="376.0" y="600.4" width="573.5" height="14.6" fill="#5e5e5e"/>
<rect x="377.0" y="601.0" width="13.0" height="13.4" fill="#787878" rx="2"/>
<path d="M386.5 603.5v8.5l-6.5-4.2z" fill="#454545"/>
<rect x="935.5" y="601.0" width="13.0" height="13.4" fill="#787878" rx="2"/>
<path d="M939 603.5v8.5l6.5-4.2z" fill="#454545"/>
<rect x="392.0" y="602.0" width="98.0" height="11.6" fill="#464646" rx="5.8"/>
<rect x="960.2" y="77.7" width="666.2" height="534.3" fill="none" stroke="#c65966" stroke-width="6.4"/>
<text x="1252.5" y="98.7" font-size="13.6" fill="#d2d2d2" textLength="81.2" lengthAdjust="spacingAndGlyphs">CIE 1976 u'v'</text>
<rect x="999.5" y="103.2" width="620" height="478.3" fill="none" stroke="#b0b0b0" stroke-width="1.2"/>
<line x1="1000.1" y1="581.5" x2="1000.1" y2="587.5" stroke="#e0e0e0" stroke-width="1.3"/>
<text x="1000.1" y="602.2" font-size="14.0" fill="#d2d2d2" text-anchor="middle">0</text>
<line x1="993.0" y1="581.6" x2="999.0" y2="581.6" stroke="#e0e0e0" stroke-width="1.3"/>
<text x="992.4" y="586.2" font-size="14.0" fill="#d2d2d2" text-anchor="end">0</text>
<line x1="1051.6" y1="581.5" x2="1051.6" y2="587.5" stroke="#e0e0e0" stroke-width="1.3"/>
<text x="1051.6" y="602.2" font-size="14.0" fill="#d2d2d2" text-anchor="middle">0,05</text>
<line x1="993.0" y1="542.2" x2="999.0" y2="542.2" stroke="#e0e0e0" stroke-width="1.3"/>
<text x="992.4" y="546.8" font-size="14.0" fill="#d2d2d2" text-anchor="end">0,05</text>
<line x1="1103.2" y1="581.5" x2="1103.2" y2="587.5" stroke="#e0e0e0" stroke-width="1.3"/>
<text x="1103.2" y="602.2" font-size="14.0" fill="#d2d2d2" text-anchor="middle">0,1</text>
<line x1="993.0" y1="502.4" x2="999.0" y2="502.4" stroke="#e0e0e0" stroke-width="1.3"/>
<text x="992.4" y="507.0" font-size="14.0" fill="#d2d2d2" text-anchor="end">0,1</text>
<line x1="1154.7" y1="581.5" x2="1154.7" y2="587.5" stroke="#e0e0e0" stroke-width="1.3"/>
<text x="1154.7" y="602.2" font-size="14.0" fill="#d2d2d2" text-anchor="middle">0,15</text>
<line x1="993.0" y1="462.6" x2="999.0" y2="462.6" stroke="#e0e0e0" stroke-width="1.3"/>
<text x="992.4" y="467.2" font-size="14.0" fill="#d2d2d2" text-anchor="end">0,15</text>
<line x1="1206.2" y1="581.5" x2="1206.2" y2="587.5" stroke="#e0e0e0" stroke-width="1.3"/>
<text x="1206.2" y="602.2" font-size="14.0" fill="#d2d2d2" text-anchor="middle">0,2</text>
<line x1="993.0" y1="422.8" x2="999.0" y2="422.8" stroke="#e0e0e0" stroke-width="1.3"/>
<text x="992.4" y="427.4" font-size="14.0" fill="#d2d2d2" text-anchor="end">0,2</text>
<line x1="1257.7" y1="581.5" x2="1257.7" y2="587.5" stroke="#e0e0e0" stroke-width="1.3"/>
<text x="1257.7" y="602.2" font-size="14.0" fill="#d2d2d2" text-anchor="middle">0,25</text>
<line x1="993.0" y1="383.0" x2="999.0" y2="383.0" stroke="#e0e0e0" stroke-width="1.3"/>
<text x="992.4" y="387.6" font-size="14.0" fill="#d2d2d2" text-anchor="end">0,25</text>
<line x1="1309.2" y1="581.5" x2="1309.2" y2="587.5" stroke="#e0e0e0" stroke-width="1.3"/>
<text x="1309.2" y="602.2" font-size="14.0" fill="#d2d2d2" text-anchor="middle">0,3</text>
<line x1="993.0" y1="343.2" x2="999.0" y2="343.2" stroke="#e0e0e0" stroke-width="1.3"/>
<text x="992.4" y="347.8" font-size="14.0" fill="#d2d2d2" text-anchor="end">0,3</text>
<line x1="1360.8" y1="581.5" x2="1360.8" y2="587.5" stroke="#e0e0e0" stroke-width="1.3"/>
<text x="1360.8" y="602.2" font-size="14.0" fill="#d2d2d2" text-anchor="middle">0,35</text>
<line x1="993.0" y1="303.4" x2="999.0" y2="303.4" stroke="#e0e0e0" stroke-width="1.3"/>
<text x="992.4" y="308.0" font-size="14.0" fill="#d2d2d2" text-anchor="end">0,35</text>
<line x1="1412.3" y1="581.5" x2="1412.3" y2="587.5" stroke="#e0e0e0" stroke-width="1.3"/>
<text x="1412.3" y="602.2" font-size="14.0" fill="#d2d2d2" text-anchor="middle">0,4</text>
<line x1="993.0" y1="263.6" x2="999.0" y2="263.6" stroke="#e0e0e0" stroke-width="1.3"/>
<text x="992.4" y="268.2" font-size="14.0" fill="#d2d2d2" text-anchor="end">0,4</text>
<line x1="1463.8" y1="581.5" x2="1463.8" y2="587.5" stroke="#e0e0e0" stroke-width="1.3"/>
<text x="1463.8" y="602.2" font-size="14.0" fill="#d2d2d2" text-anchor="middle">0,45</text>
<line x1="993.0" y1="223.8" x2="999.0" y2="223.8" stroke="#e0e0e0" stroke-width="1.3"/>
<text x="992.4" y="228.4" font-size="14.0" fill="#d2d2d2" text-anchor="end">0,45</text>
<line x1="1515.3" y1="581.5" x2="1515.3" y2="587.5" stroke="#e0e0e0" stroke-width="1.3"/>
<text x="1515.3" y="602.2" font-size="14.0" fill="#d2d2d2" text-anchor="middle">0,5</text>
<line x1="993.0" y1="184.0" x2="999.0" y2="184.0" stroke="#e0e0e0" stroke-width="1.3"/>
<text x="992.4" y="188.6" font-size="14.0" fill="#d2d2d2" text-anchor="end">0,5</text>
<line x1="1566.9" y1="581.5" x2="1566.9" y2="587.5" stroke="#e0e0e0" stroke-width="1.3"/>
<text x="1566.9" y="602.2" font-size="14.0" fill="#d2d2d2" text-anchor="middle">0,55</text>
<line x1="993.0" y1="144.2" x2="999.0" y2="144.2" stroke="#e0e0e0" stroke-width="1.3"/>
<text x="992.4" y="148.8" font-size="14.0" fill="#d2d2d2" text-anchor="end">0,55</text>
<g fill="none" stroke="#ffffff" stroke-opacity=".8" stroke-width="1.9">
<rect x="1248.2" y="175.7" width="13" height="13"/>
<rect x="1232.0" y="182.2" width="13" height="13"/>
<rect x="1173.4" y="239.4" width="13" height="13"/>
<rect x="1180.8" y="161.1" width="13" height="13"/>
<rect x="1194.4" y="244.2" width="13" height="13"/>
<rect x="1151.7" y="194.5" width="13" height="13"/>
<rect x="1301.1" y="147.6" width="13" height="13"/>
<rect x="1175.9" y="293.8" width="13" height="13"/>
<rect x="1321.7" y="189.4" width="13" height="13"/>
<rect x="1229.5" y="264.5" width="13" height="13"/>
<rect x="1182.9" y="140.5" width="13" height="13"/>
<rect x="1259.8" y="142.8" width="13" height="13"/>
<rect x="1176.5" y="346.5" width="13" height="13"/>
<rect x="1143.5" y="148.5" width="13" height="13"/>
<rect x="1387.3" y="174.9" width="13" height="13"/>
<rect x="1229.5" y="138.0" width="13" height="13"/>
<rect x="1290.0" y="237.0" width="13" height="13"/>
<rect x="1141.0" y="242.0" width="13" height="13"/>
<rect x="1457.5" y="157.4" width="13" height="13"/>
<rect x="1121.0" y="125.8" width="13" height="13"/>
<rect x="1174.0" y="448.0" width="13" height="13"/>
<rect x="1135.5" y="212.0" width="13" height="13"/>
<rect x="1306.8" y="311.1" width="13" height="13"/>
<rect x="1202.9" y="133.8" width="13" height="13"/>
<rect x="1277.7" y="155.0" width="13" height="13"/>
<rect x="1270.3" y="158.0" width="13" height="13"/>
<rect x="1286.5" y="160.0" width="13" height="13"/>
<rect x="1253.5" y="163.7" width="13" height="13"/>
<rect x="1266.5" y="165.3" width="13" height="13"/>
<rect x="1272.9" y="166.2" width="13" height="13"/>
<rect x="1252.7" y="169.4" width="13" height="13"/>
<rect x="1246.0" y="170.8" width="13" height="13"/>
<rect x="1276.1" y="171.0" width="13" height="13"/>
<rect x="1263.0" y="172.5" width="13" height="13"/>
<rect x="1236.4" y="173.3" width="13" height="13"/>
<rect x="1244.9" y="174.5" width="13" height="13"/>
<rect x="1258.0" y="167.7" width="13" height="13"/>
<rect x="1249.0" y="173.2" width="13" height="13"/>
<rect x="1260.0" y="170.2" width="13" height="13"/>
<rect x="1268.0" y="168.7" width="13" height="13"/>
<rect x="1241.0" y="176.2" width="13" height="13"/>
<rect x="1309.8" y="149.2" width="13" height="13"/>
</g>
<rect x="1197.1" y="201.1" width="12.6" height="12.6" fill="#ffffff" fill-opacity=".85" stroke="#050505" stroke-width="2"/>
<g stroke="#141008" stroke-width="1.3">
<circle cx="1155.0" cy="240.5" r="3.8" fill="#000000"/>
<circle cx="1248.6" cy="179.1" r="3.8" fill="#6e4c3c"/>
<circle cx="1234.5" cy="184.9" r="3.8" fill="#e6b8a4"/>
<circle cx="1179.0" cy="240.8" r="3.8" fill="#7088a8"/>
<circle cx="1184.1" cy="164.1" r="3.8" fill="#56684c"/>
<circle cx="1199.8" cy="246.1" r="3.8" fill="#8c88b0"/>
<circle cx="1157.3" cy="197.1" r="3.8" fill="#78b8a8"/>
<circle cx="1299.8" cy="151.7" r="3.8" fill="#9a5c34"/>
<circle cx="1181.1" cy="295.0" r="3.8" fill="#5060a0"/>
<circle cx="1318.9" cy="193.4" r="3.8" fill="#b86870"/>
<circle cx="1231.4" cy="266.8" r="3.8" fill="#5c4468"/>
<circle cx="1185.5" cy="144.2" r="3.8" fill="#98ac58"/>
<circle cx="1257.0" cy="147.0" r="3.8" fill="#d8a050"/>
<circle cx="1181.7" cy="346.2" r="3.8" fill="#4048a0"/>
<circle cx="1148.5" cy="152.5" r="3.8" fill="#5c9060"/>
<circle cx="1383.7" cy="178.3" r="3.8" fill="#a83c40"/>
<circle cx="1229.5" cy="141.4" r="3.8" fill="#e0c040"/>
<circle cx="1290.0" cy="240.5" r="3.8" fill="#b86098"/>
<circle cx="1145.9" cy="244.3" r="3.8" fill="#2c88a8"/>
<circle cx="1458.9" cy="162.7" r="3.8" fill="#f01010"/>
<circle cx="1124.8" cy="131.4" r="3.8" fill="#10e818"/>
<circle cx="1180.5" cy="457.0" r="3.8" fill="#1414e0"/>
<circle cx="1139.7" cy="214.3" r="3.8" fill="#30e8f8"/>
<circle cx="1312.4" cy="317.6" r="3.8" fill="#f020f0"/>
<circle cx="1204.3" cy="137.4" r="3.8" fill="#f8f020"/>
<circle cx="1275.7" cy="157.3" r="3.8" fill="#8a5a40"/>
<circle cx="1268.3" cy="160.3" r="3.8" fill="#8c5e44"/>
<circle cx="1284.5" cy="162.3" r="3.8" fill="#6c4430"/>
<circle cx="1251.5" cy="166.0" r="3.8" fill="#c89070"/>
<circle cx="1264.5" cy="167.6" r="3.8" fill="#d89c80"/>
<circle cx="1270.9" cy="168.5" r="3.8" fill="#e0a088"/>
<circle cx="1250.7" cy="171.7" r="3.8" fill="#d09878"/>
<circle cx="1244.0" cy="173.1" r="3.8" fill="#d8a488"/>
<circle cx="1274.1" cy="173.3" r="3.8" fill="#eca890"/>
<circle cx="1261.0" cy="174.8" r="3.8" fill="#d89880"/>
<circle cx="1234.4" cy="175.6" r="3.8" fill="#f0c0a8"/>
<circle cx="1242.9" cy="176.8" r="3.8" fill="#c89478"/>
<circle cx="1256.0" cy="170.0" r="3.8" fill="#c08868"/>
<circle cx="1247.0" cy="175.5" r="3.8" fill="#b88060"/>
<circle cx="1258.0" cy="172.5" r="3.8" fill="#d09070"/>
<circle cx="1266.0" cy="171.0" r="3.8" fill="#d8987c"/>
<circle cx="1239.0" cy="178.5" r="3.8" fill="#e0b098"/>
<circle cx="1301.2" cy="152.9" r="3.8" fill="#8a5a3c"/>
<circle cx="1202.0" cy="203.1" r="3.8" fill="#ffffff"/>
<circle cx="1201.8" cy="203.1" r="3.8" fill="#e0e0e0"/>
<circle cx="1202.0" cy="203.3" r="3.8" fill="#cccccc"/>
<circle cx="1202.2" cy="203.5" r="3.8" fill="#b4b4b4"/>
<circle cx="1202.7" cy="203.6" r="3.8" fill="#9a9a9a"/>
</g>
<rect x="1421.2" y="413.2" width="192.6" height="126.8" fill="url(#ins)" stroke="#b49494" stroke-width="1.4"/>
<rect x="1510" y="469.6" width="13" height="13" fill="none" stroke="#f4e0e0" stroke-width="1.5"/>
<circle cx="1494.3" cy="457.3" r="3.8" fill="#b86068" stroke="#3a1418" stroke-width="1.2"/>
<rect x="1371.6" y="548.8" width="245.4" height="27.3" fill="#2c2c2c"/>
<text x="1373.2" y="570.1" font-size="19.6" fill="#f2f2f2" textLength="203.9" lengthAdjust="spacingAndGlyphs">RGB Triplet: 182, 88, 99</text>
<text x="60.8" y="645.9" font-size="27.0" fill="#f2f2f2" textLength="225.2" lengthAdjust="spacingAndGlyphs">Avg dE2000: 2,93</text>
<text x="57.0" y="685.8" font-size="27.0" fill="#f2f2f2" textLength="234.3" lengthAdjust="spacingAndGlyphs">Max dE2000: 5,44</text>
<text x="26.5" y="731.0" font-size="26.2" fill="#f2f2f2" textLength="211.5" lengthAdjust="spacingAndGlyphs">Current Reading</text>
<text x="26.5" y="766.9" font-size="23.6" fill="#f2f2f2" textLength="98.3" lengthAdjust="spacingAndGlyphs">x: 0,4583</text>
<text x="178.4" y="766.9" font-size="23.6" fill="#f2f2f2" textLength="98.6" lengthAdjust="spacingAndGlyphs">y: 0,3195</text>
<text x="26.5" y="805.2" font-size="23.6" fill="#f2f2f2" textLength="92.5" lengthAdjust="spacingAndGlyphs">fL: 16,15</text>
<text x="26.5" y="838.6" font-size="23.6" fill="#f2f2f2" textLength="139.1" lengthAdjust="spacingAndGlyphs">cd/m²: 55,32</text>
<rect x="323.0" y="628.6" width="1304.0" height="221.0" fill="#0a0a0a"/>
<rect x="324.0" y="630.6" width="1303.0" height="11.6" fill="#2e2e2e"/>
<rect x="324.0" y="642.2" width="1303.0" height="11.3" fill="#171717"/>
<rect x="324.0" y="653.5" width="1303.0" height="23.2" fill="#434343"/>
<rect x="324.0" y="676.7" width="1303.0" height="22.4" fill="#7c7c7c"/>
<rect x="324.0" y="699.1" width="1303.0" height="22.7" fill="#434343"/>
<rect x="324.0" y="721.8" width="1303.0" height="22.4" fill="#7c7c7c"/>
<rect x="324.0" y="744.2" width="1303.0" height="22.7" fill="#434343"/>
<rect x="324.0" y="766.9" width="1303.0" height="22.1" fill="#7c7c7c"/>
<rect x="324.0" y="789.0" width="1303.0" height="22.7" fill="#434343"/>
<rect x="324.0" y="811.7" width="1303.0" height="22.9" fill="#7c7c7c"/>
<rect x="324.0" y="834.6" width="1303.0" height="14.0" fill="#5c5c5c"/>
<rect x="325.8" y="835.4" width="15.2" height="12.6" fill="#7c7c7c" rx="2"/>
<path d="M336.5 837.6v8.2l-6.4-4.1z" fill="#404040"/>
<rect x="1611.0" y="835.4" width="15.2" height="12.6" fill="#7c7c7c" rx="2"/>
<path d="M1616 837.6v8.2l6.4-4.1z" fill="#404040"/>
<rect x="345.0" y="836.0" width="386.0" height="11.4" fill="#444444" rx="5.7"/>
<text x="339.0" y="671.1" font-size="14.0" fill="#f6f6f6" font-weight="bold" textLength="68.8" lengthAdjust="spacingAndGlyphs" stroke="#f6f6f6" stroke-width=".45">x: CIE31</text>
<text x="339.0" y="693.4" font-size="14.0" fill="#f6f6f6" font-weight="bold" textLength="68.8" lengthAdjust="spacingAndGlyphs" stroke="#f6f6f6" stroke-width=".45">y: CIE31</text>
<text x="339.0" y="716.3" font-size="14.0" fill="#f6f6f6" font-weight="bold" textLength="10.5" lengthAdjust="spacingAndGlyphs" stroke="#f6f6f6" stroke-width=".45">Y</text>
<text x="339.0" y="738.8" font-size="14.0" fill="#f6f6f6" font-weight="bold" textLength="125.3" lengthAdjust="spacingAndGlyphs" stroke="#f6f6f6" stroke-width=".45">Target x:CIE31</text>
<text x="339.0" y="761.4" font-size="14.0" fill="#f6f6f6" font-weight="bold" textLength="125.3" lengthAdjust="spacingAndGlyphs" stroke="#f6f6f6" stroke-width=".45">Target y:CIE31</text>
<text x="339.0" y="784.3" font-size="14.0" fill="#f6f6f6" font-weight="bold" textLength="72.5" lengthAdjust="spacingAndGlyphs" stroke="#f6f6f6" stroke-width=".45">Target Y</text>
<text x="339.0" y="806.6" font-size="14.0" fill="#f6f6f6" font-weight="bold" textLength="72.0" lengthAdjust="spacingAndGlyphs" stroke="#f6f6f6" stroke-width=".45">ΔE 2000</text>
<text x="339.0" y="829.3" font-size="14.0" fill="#f6f6f6" font-weight="bold" textLength="57.0" lengthAdjust="spacingAndGlyphs" stroke="#f6f6f6" stroke-width=".45">ΔE ITP</text>
<text x="499.9" y="646.6" font-size="13.8" fill="#f0f0f0" textLength="46.2" lengthAdjust="spacingAndGlyphs">White</text>
<text x="485.3" y="671.1" font-size="14.4" fill="#f0f0f0" textLength="54.7" lengthAdjust="spacingAndGlyphs">0,3158</text>
<text x="485.3" y="693.4" font-size="14.4" fill="#f0f0f0" textLength="54.7" lengthAdjust="spacingAndGlyphs">0,3384</text>
<text x="485.3" y="716.3" font-size="14.4" fill="#f0f0f0" textLength="74.7" lengthAdjust="spacingAndGlyphs">288,7431</text>
<text x="485.3" y="738.8" font-size="14.4" fill="#f0f0f0" textLength="54.7" lengthAdjust="spacingAndGlyphs">0,3127</text>
<text x="485.3" y="761.4" font-size="14.4" fill="#f0f0f0" textLength="54.7" lengthAdjust="spacingAndGlyphs">0,3290</text>
<text x="485.3" y="784.3" font-size="14.4" fill="#f0f0f0" textLength="74.7" lengthAdjust="spacingAndGlyphs">288,7431</text>
<text x="485.3" y="806.6" font-size="14.4" fill="#f0f0f0" textLength="54.7" lengthAdjust="spacingAndGlyphs">5,4415</text>
<text x="485.3" y="829.3" font-size="14.4" fill="#f0f0f0" textLength="54.7" lengthAdjust="spacingAndGlyphs">3,8276</text>
<text x="579.0" y="646.6" font-size="13.8" fill="#f0f0f0" textLength="58.8" lengthAdjust="spacingAndGlyphs">Gray 80</text>
<text x="570.4" y="671.1" font-size="14.4" fill="#f0f0f0" textLength="54.7" lengthAdjust="spacingAndGlyphs">0,3156</text>
<text x="570.4" y="693.4" font-size="14.4" fill="#f0f0f0" textLength="54.7" lengthAdjust="spacingAndGlyphs">0,3384</text>
<text x="570.4" y="716.3" font-size="14.4" fill="#f0f0f0" textLength="74.7" lengthAdjust="spacingAndGlyphs">231,4642</text>
<text x="570.4" y="738.8" font-size="14.4" fill="#f0f0f0" textLength="54.7" lengthAdjust="spacingAndGlyphs">0,3127</text>
<text x="570.4" y="761.4" font-size="14.4" fill="#f0f0f0" textLength="54.7" lengthAdjust="spacingAndGlyphs">0,3290</text>
<text x="570.4" y="784.3" font-size="14.4" fill="#f0f0f0" textLength="74.7" lengthAdjust="spacingAndGlyphs">228,7496</text>
<text x="570.4" y="806.6" font-size="14.4" fill="#f0f0f0" textLength="54.7" lengthAdjust="spacingAndGlyphs">5,1529</text>
<text x="570.4" y="829.3" font-size="14.4" fill="#f0f0f0" textLength="54.7" lengthAdjust="spacingAndGlyphs">3,8403</text>
<text x="664.2" y="646.6" font-size="13.8" fill="#f0f0f0" textLength="58.4" lengthAdjust="spacingAndGlyphs">Gray 65</text>
<text x="656.0" y="671.1" font-size="14.4" fill="#f0f0f0" textLength="54.7" lengthAdjust="spacingAndGlyphs">0,3157</text>
<text x="656.0" y="693.4" font-size="14.4" fill="#f0f0f0" textLength="54.7" lengthAdjust="spacingAndGlyphs">0,3381</text>
<text x="656.0" y="716.3" font-size="14.4" fill="#f0f0f0" textLength="74.7" lengthAdjust="spacingAndGlyphs">191,7105</text>
<text x="656.0" y="738.8" font-size="14.4" fill="#f0f0f0" textLength="54.7" lengthAdjust="spacingAndGlyphs">0,3127</text>
<text x="656.0" y="761.4" font-size="14.4" fill="#f0f0f0" textLength="54.7" lengthAdjust="spacingAndGlyphs">0,3290</text>
<text x="656.0" y="784.3" font-size="14.4" fill="#f0f0f0" textLength="74.7" lengthAdjust="spacingAndGlyphs">187,5574</text>
<text x="656.0" y="806.6" font-size="14.4" fill="#f0f0f0" textLength="54.7" lengthAdjust="spacingAndGlyphs">4,7091</text>
<text x="656.0" y="829.3" font-size="14.4" fill="#f0f0f0" textLength="54.7" lengthAdjust="spacingAndGlyphs">3,9007</text>
<text x="749.8" y="646.6" font-size="13.8" fill="#f0f0f0" textLength="58.4" lengthAdjust="spacingAndGlyphs">Gray 50</text>
<text x="741.2" y="671.1" font-size="14.4" fill="#f0f0f0" textLength="54.7" lengthAdjust="spacingAndGlyphs">0,3156</text>
<text x="741.2" y="693.4" font-size="14.4" fill="#f0f0f0" textLength="54.7" lengthAdjust="spacingAndGlyphs">0,3375</text>
<text x="741.2" y="716.3" font-size="14.4" fill="#f0f0f0" textLength="74.7" lengthAdjust="spacingAndGlyphs">148,9646</text>
<text x="741.2" y="738.8" font-size="14.4" fill="#f0f0f0" textLength="54.7" lengthAdjust="spacingAndGlyphs">0,3127</text>
<text x="741.2" y="761.4" font-size="14.4" fill="#f0f0f0" textLength="54.7" lengthAdjust="spacingAndGlyphs">0,3290</text>
<text x="741.2" y="784.3" font-size="14.4" fill="#f0f0f0" textLength="74.7" lengthAdjust="spacingAndGlyphs">144,7433</text>
<text x="741.2" y="806.6" font-size="14.4" fill="#f0f0f0" textLength="54.7" lengthAdjust="spacingAndGlyphs">4,0814</text>
<text x="741.2" y="829.3" font-size="14.4" fill="#f0f0f0" textLength="54.7" lengthAdjust="spacingAndGlyphs">3,8587</text>
<text x="835.4" y="646.6" font-size="13.8" fill="#f0f0f0" textLength="58.0" lengthAdjust="spacingAndGlyphs">Gray 35</text>
<text x="826.8" y="671.1" font-size="14.4" fill="#f0f0f0" textLength="54.7" lengthAdjust="spacingAndGlyphs">0,3162</text>
<text x="826.8" y="693.4" font-size="14.4" fill="#f0f0f0" textLength="54.7" lengthAdjust="spacingAndGlyphs">0,3371</text>
<text x="826.8" y="716.3" font-size="14.4" fill="#f0f0f0" textLength="74.7" lengthAdjust="spacingAndGlyphs">105,4011</text>
<text x="826.8" y="738.8" font-size="14.4" fill="#f0f0f0" textLength="54.7" lengthAdjust="spacingAndGlyphs">0,3127</text>
<text x="826.8" y="761.4" font-size="14.4" fill="#f0f0f0" textLength="54.7" lengthAdjust="spacingAndGlyphs">0,3290</text>
<text x="826.8" y="784.3" font-size="14.4" fill="#f0f0f0" textLength="74.7" lengthAdjust="spacingAndGlyphs">101,2326</text>
<text x="826.8" y="806.6" font-size="14.4" fill="#f0f0f0" textLength="54.7" lengthAdjust="spacingAndGlyphs">3,4418</text>
<text x="826.8" y="829.3" font-size="14.4" fill="#f0f0f0" textLength="54.7" lengthAdjust="spacingAndGlyphs">4,1858</text>
<text x="919.7" y="646.6" font-size="13.8" fill="#f0f0f0" textLength="40.2" lengthAdjust="spacingAndGlyphs">Black</text>
<text x="912.0" y="671.1" font-size="14.4" fill="#f0f0f0" textLength="54.7" lengthAdjust="spacingAndGlyphs">0,2235</text>
<text x="912.0" y="693.4" font-size="14.4" fill="#f0f0f0" textLength="54.7" lengthAdjust="spacingAndGlyphs">0,2809</text>
<text x="912.0" y="716.3" font-size="14.4" fill="#f0f0f0" textLength="54.7" lengthAdjust="spacingAndGlyphs">0,0001</text>
<text x="912.0" y="738.8" font-size="14.4" fill="#f0f0f0" textLength="54.7" lengthAdjust="spacingAndGlyphs">0,3127</text>
<text x="912.0" y="761.4" font-size="14.4" fill="#f0f0f0" textLength="54.7" lengthAdjust="spacingAndGlyphs">0,3290</text>
<text x="912.0" y="784.3" font-size="14.4" fill="#f0f0f0" textLength="54.7" lengthAdjust="spacingAndGlyphs">0,0001</text>
<text x="912.0" y="806.6" font-size="14.4" fill="#f0f0f0" textLength="54.7" lengthAdjust="spacingAndGlyphs">0,0003</text>
<text x="912.0" y="829.3" font-size="14.4" fill="#f0f0f0" textLength="54.7" lengthAdjust="spacingAndGlyphs">0,4560</text>
<text x="977.2" y="646.6" font-size="13.8" fill="#f0f0f0" textLength="71.0" lengthAdjust="spacingAndGlyphs">Dark Skin</text>
<text x="977.2" y="671.1" font-size="14.4" fill="#f0f0f0" textLength="54.7" lengthAdjust="spacingAndGlyphs">0,4038</text>
<text x="977.2" y="693.4" font-size="14.4" fill="#f0f0f0" textLength="54.7" lengthAdjust="spacingAndGlyphs">0,3742</text>
<text x="977.2" y="716.3" font-size="14.4" fill="#f0f0f0" textLength="64.7" lengthAdjust="spacingAndGlyphs">30,2715</text>
<text x="977.2" y="738.8" font-size="14.4" fill="#f0f0f0" textLength="54.7" lengthAdjust="spacingAndGlyphs">0,4063</text>
<text x="977.2" y="761.4" font-size="14.4" fill="#f0f0f0" textLength="54.7" lengthAdjust="spacingAndGlyphs">0,3645</text>
<text x="977.2" y="784.3" font-size="14.4" fill="#f0f0f0" textLength="64.7" lengthAdjust="spacingAndGlyphs">28,5783</text>
<text x="977.2" y="806.6" font-size="14.4" fill="#f0f0f0" textLength="54.7" lengthAdjust="spacingAndGlyphs">3,0647</text>
<text x="977.2" y="829.3" font-size="14.4" fill="#f0f0f0" textLength="54.7" lengthAdjust="spacingAndGlyphs">6,3410</text>
<text x="1060.5" y="646.6" font-size="13.8" fill="#f0f0f0" textLength="71.7" lengthAdjust="spacingAndGlyphs">Light Skin</text>
<text x="1058.4" y="671.1" font-size="14.4" fill="#f0f0f0" textLength="54.7" lengthAdjust="spacingAndGlyphs">0,3786</text>
<text x="1058.4" y="693.4" font-size="14.4" fill="#f0f0f0" textLength="54.7" lengthAdjust="spacingAndGlyphs">0,3664</text>
<text x="1058.4" y="716.3" font-size="14.4" fill="#f0f0f0" textLength="74.7" lengthAdjust="spacingAndGlyphs">105,9974</text>
<text x="1058.4" y="738.8" font-size="14.4" fill="#f0f0f0" textLength="54.7" lengthAdjust="spacingAndGlyphs">0,3780</text>
<text x="1058.4" y="761.4" font-size="14.4" fill="#f0f0f0" textLength="54.7" lengthAdjust="spacingAndGlyphs">0,3562</text>
<text x="1058.4" y="784.3" font-size="14.4" fill="#f0f0f0" textLength="74.7" lengthAdjust="spacingAndGlyphs">102,5961</text>
<text x="1058.4" y="806.6" font-size="14.4" fill="#f0f0f0" textLength="54.7" lengthAdjust="spacingAndGlyphs">4,0944</text>
<text x="1058.4" y="829.3" font-size="14.4" fill="#f0f0f0" textLength="54.7" lengthAdjust="spacingAndGlyphs">5,4282</text>
<text x="1145.3" y="646.6" font-size="13.8" fill="#f0f0f0" textLength="63.2" lengthAdjust="spacingAndGlyphs">Blue Sky</text>
<text x="1143.7" y="671.1" font-size="14.4" fill="#f0f0f0" textLength="54.7" lengthAdjust="spacingAndGlyphs">0,2519</text>
<text x="1143.7" y="693.4" font-size="14.4" fill="#f0f0f0" textLength="54.7" lengthAdjust="spacingAndGlyphs">0,2741</text>
<text x="1143.7" y="716.3" font-size="14.4" fill="#f0f0f0" textLength="64.7" lengthAdjust="spacingAndGlyphs">58,5632</text>
<text x="1143.7" y="738.8" font-size="14.4" fill="#f0f0f0" textLength="54.7" lengthAdjust="spacingAndGlyphs">0,2489</text>
<text x="1143.7" y="761.4" font-size="14.4" fill="#f0f0f0" textLength="54.7" lengthAdjust="spacingAndGlyphs">0,2653</text>
<text x="1143.7" y="784.3" font-size="14.4" fill="#f0f0f0" textLength="64.7" lengthAdjust="spacingAndGlyphs">54,9361</text>
<text x="1143.7" y="806.6" font-size="14.4" fill="#f0f0f0" textLength="54.7" lengthAdjust="spacingAndGlyphs">2,5023</text>
<text x="1143.7" y="829.3" font-size="14.4" fill="#f0f0f0" textLength="54.7" lengthAdjust="spacingAndGlyphs">5,1588</text>
<text x="1225.3" y="646.6" font-size="13.8" fill="#f0f0f0" textLength="53.3" lengthAdjust="spacingAndGlyphs">Foliage</text>
<text x="1219.1" y="671.1" font-size="14.4" fill="#f0f0f0" textLength="54.7" lengthAdjust="spacingAndGlyphs">0,3422</text>
<text x="1219.1" y="693.4" font-size="14.4" fill="#f0f0f0" textLength="54.7" lengthAdjust="spacingAndGlyphs">0,4437</text>
<text x="1219.1" y="716.3" font-size="14.4" fill="#f0f0f0" textLength="64.7" lengthAdjust="spacingAndGlyphs">40,1058</text>
<text x="1219.1" y="738.8" font-size="14.4" fill="#f0f0f0" textLength="54.7" lengthAdjust="spacingAndGlyphs">0,3416</text>
<text x="1219.1" y="761.4" font-size="14.4" fill="#f0f0f0" textLength="54.7" lengthAdjust="spacingAndGlyphs">0,4319</text>
<text x="1219.1" y="784.3" font-size="14.4" fill="#f0f0f0" textLength="64.7" lengthAdjust="spacingAndGlyphs">37,8762</text>
<text x="1219.1" y="806.6" font-size="14.4" fill="#f0f0f0" textLength="54.7" lengthAdjust="spacingAndGlyphs">1,9146</text>
<text x="1219.1" y="829.3" font-size="14.4" fill="#f0f0f0" textLength="54.7" lengthAdjust="spacingAndGlyphs">5,8462</text>
<text x="1294.6" y="646.6" font-size="13.8" fill="#f0f0f0" textLength="89.8" lengthAdjust="spacingAndGlyphs">Blue Flower</text>
<text x="1294.2" y="671.1" font-size="14.4" fill="#f0f0f0" textLength="54.7" lengthAdjust="spacingAndGlyphs">0,2712</text>
<text x="1294.2" y="693.4" font-size="14.4" fill="#f0f0f0" textLength="54.7" lengthAdjust="spacingAndGlyphs">0,2603</text>
<text x="1294.2" y="716.3" font-size="14.4" fill="#f0f0f0" textLength="64.7" lengthAdjust="spacingAndGlyphs">72,2173</text>
<text x="1294.2" y="738.8" font-size="14.4" fill="#f0f0f0" textLength="54.7" lengthAdjust="spacingAndGlyphs">0,2686</text>
<text x="1294.2" y="761.4" font-size="14.4" fill="#f0f0f0" textLength="54.7" lengthAdjust="spacingAndGlyphs">0,2528</text>
<text x="1294.2" y="784.3" font-size="14.4" fill="#f0f0f0" textLength="64.7" lengthAdjust="spacingAndGlyphs">68,6372</text>
<text x="1294.2" y="806.6" font-size="14.4" fill="#f0f0f0" textLength="54.7" lengthAdjust="spacingAndGlyphs">1,6871</text>
<text x="1294.2" y="829.3" font-size="14.4" fill="#f0f0f0" textLength="54.7" lengthAdjust="spacingAndGlyphs">4,3512</text>
<text x="1395.4" y="646.6" font-size="13.8" fill="#f0f0f0" textLength="96.4" lengthAdjust="spacingAndGlyphs">Bluish Green</text>
<text x="1394.6" y="671.1" font-size="14.4" fill="#f0f0f0" textLength="54.7" lengthAdjust="spacingAndGlyphs">0,2641</text>
<text x="1394.6" y="693.4" font-size="14.4" fill="#f0f0f0" textLength="54.7" lengthAdjust="spacingAndGlyphs">0,3689</text>
<text x="1394.6" y="716.3" font-size="14.4" fill="#f0f0f0" textLength="74.7" lengthAdjust="spacingAndGlyphs">127,4523</text>
<text x="1394.6" y="738.8" font-size="14.4" fill="#f0f0f0" textLength="54.7" lengthAdjust="spacingAndGlyphs">0,2614</text>
<text x="1394.6" y="761.4" font-size="14.4" fill="#f0f0f0" textLength="54.7" lengthAdjust="spacingAndGlyphs">0,3594</text>
<text x="1394.6" y="784.3" font-size="14.4" fill="#f0f0f0" textLength="74.7" lengthAdjust="spacingAndGlyphs">122,4511</text>
<text x="1394.6" y="806.6" font-size="14.4" fill="#f0f0f0" textLength="54.7" lengthAdjust="spacingAndGlyphs">2,2374</text>
<text x="1394.6" y="829.3" font-size="14.4" fill="#f0f0f0" textLength="54.7" lengthAdjust="spacingAndGlyphs">4,2947</text>
<text x="1507.0" y="646.6" font-size="13.8" fill="#f0f0f0" textLength="55.7" lengthAdjust="spacingAndGlyphs">Orange</text>
<text x="1502.0" y="671.1" font-size="14.4" fill="#f0f0f0" textLength="54.7" lengthAdjust="spacingAndGlyphs">0,5107</text>
<text x="1502.0" y="693.4" font-size="14.4" fill="#f0f0f0" textLength="54.7" lengthAdjust="spacingAndGlyphs">0,4193</text>
<text x="1502.0" y="716.3" font-size="14.4" fill="#f0f0f0" textLength="64.7" lengthAdjust="spacingAndGlyphs">83,2556</text>
<text x="1502.0" y="738.8" font-size="14.4" fill="#f0f0f0" textLength="54.7" lengthAdjust="spacingAndGlyphs">0,5146</text>
<text x="1502.0" y="761.4" font-size="14.4" fill="#f0f0f0" textLength="54.7" lengthAdjust="spacingAndGlyphs">0,4095</text>
<text x="1502.0" y="784.3" font-size="14.4" fill="#f0f0f0" textLength="64.7" lengthAdjust="spacingAndGlyphs">82,5183</text>
<text x="1502.0" y="806.6" font-size="14.4" fill="#f0f0f0" textLength="54.7" lengthAdjust="spacingAndGlyphs">2,8084</text>
<text x="1502.0" y="829.3" font-size="14.4" fill="#f0f0f0" textLength="54.7" lengthAdjust="spacingAndGlyphs">7,3040</text>
<text x="1577.9" y="646.6" font-size="13.8" fill="#f0f0f0" textLength="101.1" lengthAdjust="spacingAndGlyphs">Purplish Blue</text>
<text x="1577.0" y="671.1" font-size="14.4" fill="#f0f0f0" textLength="54.7" lengthAdjust="spacingAndGlyphs">0,2166</text>
<text x="1577.0" y="693.4" font-size="14.4" fill="#f0f0f0" textLength="54.7" lengthAdjust="spacingAndGlyphs">0,1957</text>
<text x="1577.0" y="716.3" font-size="14.4" fill="#f0f0f0" textLength="64.7" lengthAdjust="spacingAndGlyphs">36,0235</text>
<text x="1577.0" y="738.8" font-size="14.4" fill="#f0f0f0" textLength="54.7" lengthAdjust="spacingAndGlyphs">0,2147</text>
<text x="1577.0" y="761.4" font-size="14.4" fill="#f0f0f0" textLength="54.7" lengthAdjust="spacingAndGlyphs">0,1891</text>
<text x="1577.0" y="784.3" font-size="14.4" fill="#f0f0f0" textLength="64.7" lengthAdjust="spacingAndGlyphs">33,8021</text>
<text x="1577.0" y="806.6" font-size="14.4" fill="#f0f0f0" textLength="54.7" lengthAdjust="spacingAndGlyphs">1,3628</text>
<text x="1577.0" y="829.3" font-size="14.4" fill="#f0f0f0" textLength="54.7" lengthAdjust="spacingAndGlyphs">4,5513</text>
</svg>
</div></body></html>
